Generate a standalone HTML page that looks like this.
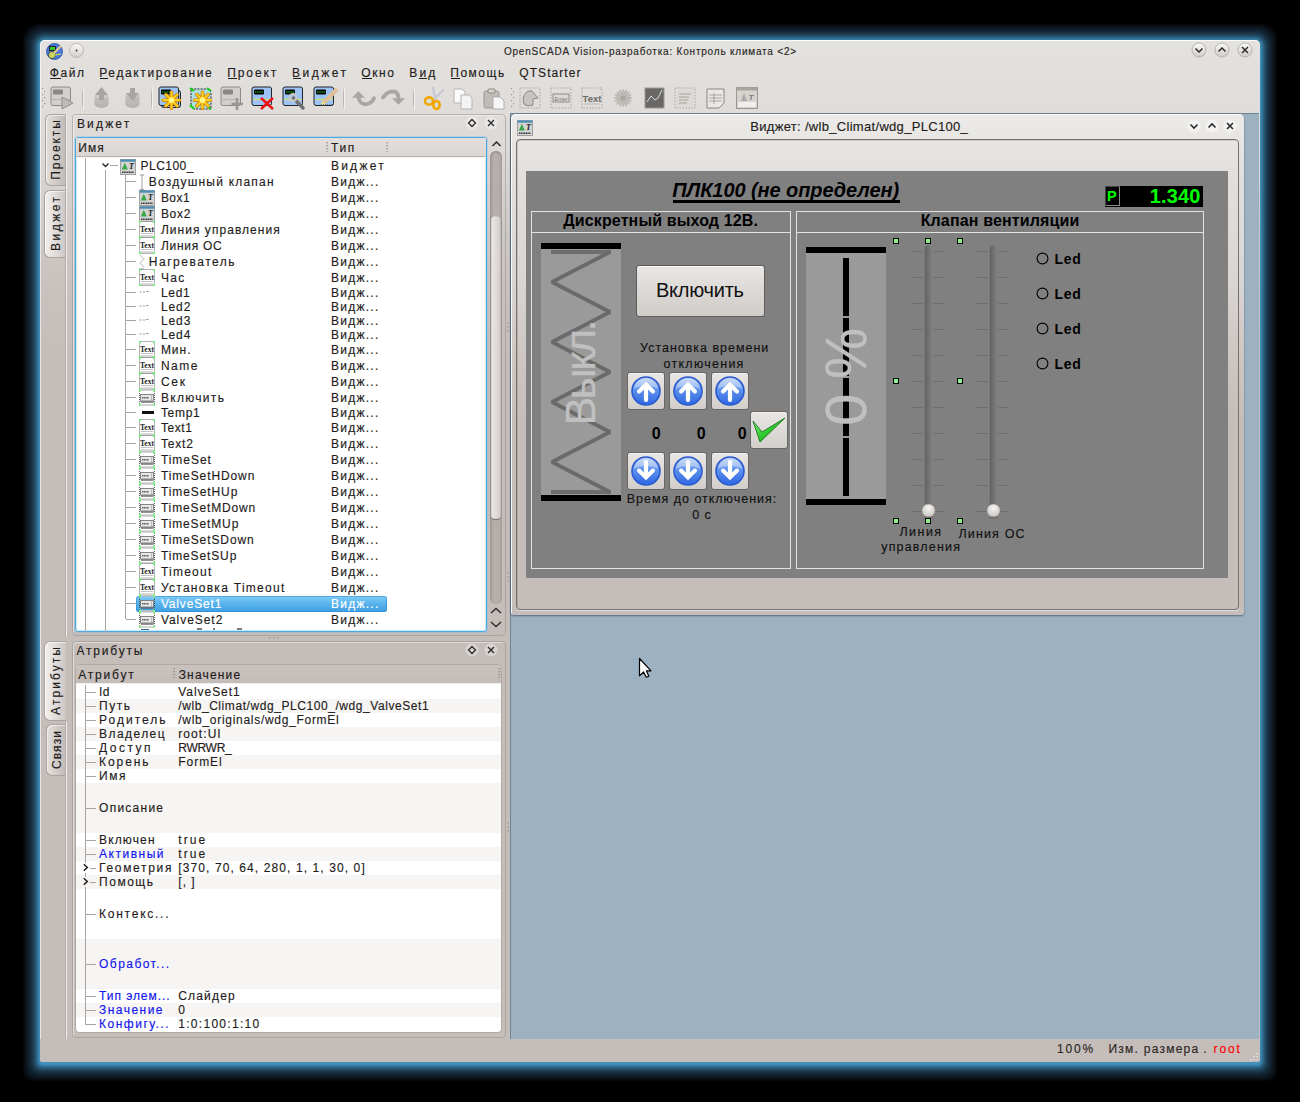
<!DOCTYPE html>
<html><head><meta charset="utf-8"><title>OpenSCADA</title>
<style>
html,body{margin:0;padding:0;}
body{width:1300px;height:1102px;position:relative;overflow:hidden;background:#000;font-family:"Liberation Sans",sans-serif;}
</style></head><body>
<div style="position:absolute;left:40px;top:40px;width:1220px;height:1022px;border-radius:5px 5px 3px 3px;box-shadow:inset 0 1px 0 rgba(255,255,255,0.9),inset 1px 0 0 rgba(255,255,255,0.6),0 1.5px 1px 1px rgb(63, 144, 186),0 1.5px 1px 2px rgb(55, 127, 167),0 1.5px 1px 3px rgb(49, 113, 149),0 1.5px 1px 4px rgb(44, 100, 132),0 1.5px 1px 5px rgb(40, 86, 114),0 1.5px 1px 6px rgb(36, 75, 100),0 1.5px 1px 7px rgb(32, 66, 88),0 1.5px 1px 8px rgb(29, 57, 76),0 1.5px 1px 9px rgb(26, 49, 66),0 1.5px 1px 10px rgb(23, 43, 59),0 1.5px 1px 11px rgb(20, 37, 52),0 1.5px 1px 12px rgb(18, 32, 45),0 1.5px 1px 13px rgb(16, 28, 38),0 1.5px 1px 14px rgb(14, 23, 31),0 1.5px 1px 15px rgb(12, 19, 25),0 1.5px 1px 16px rgb(10, 14, 19),0 1.5px 1px 17px rgb(7, 10, 13);background:linear-gradient(#e4e2df 0px,#dcd9d6 110px,#cec8c5 200px,#c7c0bc 260px,#c5bdb9 320px,#c5bdb9 1022px);"></div>
<span style="position:absolute;left:503.90px;top:46.53px;font:normal 400 10px/10px 'Liberation Sans',sans-serif;color:#2a2725;white-space:pre;letter-spacing:0.796px;-webkit-text-stroke:0.15px currentColor;">OpenSCADA Vision-разработка: Контроль климата &lt;2&gt;</span>
<svg style="position:absolute;left:46px;top:43px;" width="17" height="17" viewBox="0 0 17 17"><circle cx="8.5" cy="8.5" r="8" fill="#4a78d8" stroke="#2a4aa0" stroke-width="0.8"/><rect x="3" y="3" width="7" height="5" fill="#222"/><rect x="4" y="4" width="5" height="3" fill="#3c3"/><circle cx="6" cy="12" r="3.5" fill="#c8d860" stroke="#333" stroke-width="0.7"/><path d="M8 10 L15 3" stroke="#e8c890" stroke-width="2.2"/><path d="M9 12 L15 11" stroke="#ee4" stroke-width="1"/></svg>
<svg style="position:absolute;left:69px;top:43px;" width="16" height="16" viewBox="0 0 16 16"><defs><linearGradient id="gb" x1="0" y1="0" x2="0" y2="1"><stop offset="0" stop-color="#fbfbfa"/><stop offset="1" stop-color="#cfcbc8"/></linearGradient></defs><circle cx="7.5" cy="7.5" r="7" fill="url(#gb)" stroke="#b0aca8" stroke-width="0.8"/><circle cx="7.5" cy="7.5" r="0.9" fill="#333"/></svg>
<svg style="position:absolute;left:1191px;top:42px;" width="16" height="17" viewBox="0 0 16 17"><circle cx="8" cy="8" r="7" fill="url(#gb)" stroke="#aaa6a2" stroke-width="0.8"/><path d="M4.5 6.5 L8 10 L11.5 6.5" stroke="#2b2b2b" stroke-width="1.5" fill="none"/></svg>
<svg style="position:absolute;left:1214px;top:42px;" width="16" height="17" viewBox="0 0 16 17"><circle cx="8" cy="8" r="7" fill="url(#gb)" stroke="#aaa6a2" stroke-width="0.8"/><path d="M4.5 9.5 L8 6 L11.5 9.5" stroke="#2b2b2b" stroke-width="1.5" fill="none"/></svg>
<svg style="position:absolute;left:1237px;top:42px;" width="16" height="17" viewBox="0 0 16 17"><circle cx="8" cy="8" r="7" fill="url(#gb)" stroke="#aaa6a2" stroke-width="0.8"/><path d="M5 5 L11 11 M11 5 L5 11" stroke="#2b2b2b" stroke-width="1.5" fill="none"/></svg>
<span style="position:absolute;left:49.68px;top:67.44px;font:normal 400 12px/12px 'Liberation Sans',sans-serif;color:#1f1c1b;white-space:pre;letter-spacing:1.641px;-webkit-text-stroke:0.15px currentColor;">Файл</span>
<span style="position:absolute;left:99.28px;top:67.44px;font:normal 400 12px/12px 'Liberation Sans',sans-serif;color:#1f1c1b;white-space:pre;letter-spacing:1.617px;-webkit-text-stroke:0.15px currentColor;">Редактирование</span>
<span style="position:absolute;left:227.28px;top:67.44px;font:normal 400 12px/12px 'Liberation Sans',sans-serif;color:#1f1c1b;white-space:pre;letter-spacing:1.882px;-webkit-text-stroke:0.15px currentColor;">Проект</span>
<span style="position:absolute;left:292.08px;top:67.44px;font:normal 400 12px/12px 'Liberation Sans',sans-serif;color:#1f1c1b;white-space:pre;letter-spacing:2.465px;-webkit-text-stroke:0.15px currentColor;">Виджет</span>
<span style="position:absolute;left:361.28px;top:67.44px;font:normal 400 12px/12px 'Liberation Sans',sans-serif;color:#1f1c1b;white-space:pre;letter-spacing:1.583px;-webkit-text-stroke:0.15px currentColor;">Окно</span>
<span style="position:absolute;left:409.28px;top:67.44px;font:normal 400 12px/12px 'Liberation Sans',sans-serif;color:#1f1c1b;white-space:pre;letter-spacing:2.161px;-webkit-text-stroke:0.15px currentColor;">Вид</span>
<span style="position:absolute;left:450.28px;top:67.44px;font:normal 400 12px/12px 'Liberation Sans',sans-serif;color:#1f1c1b;white-space:pre;letter-spacing:1.516px;-webkit-text-stroke:0.15px currentColor;">Помощь</span>
<span style="position:absolute;left:519.28px;top:67.44px;font:normal 400 12px/12px 'Liberation Sans',sans-serif;color:#1f1c1b;white-space:pre;letter-spacing:1.069px;-webkit-text-stroke:0.15px currentColor;">QTStarter</span>
<div style="position:absolute;left:50.4px;top:78px;width:10.5px;height:1px;background:#1f1c1b;"></div>
<div style="position:absolute;left:100px;top:78px;width:8px;height:1px;background:#1f1c1b;"></div>
<div style="position:absolute;left:228px;top:78px;width:9px;height:1px;background:#1f1c1b;"></div>
<div style="position:absolute;left:292.8px;top:78px;width:8.5px;height:1px;background:#1f1c1b;"></div>
<div style="position:absolute;left:362px;top:78px;width:9.5px;height:1px;background:#1f1c1b;"></div>
<div style="position:absolute;left:419px;top:78px;width:8px;height:1px;background:#1f1c1b;"></div>
<div style="position:absolute;left:451px;top:78px;width:9px;height:1px;background:#1f1c1b;"></div>
<svg style="position:absolute;left:42px;top:88px;" width="4" height="22" viewBox="0 0 4 22"><rect x="0" y="0" width="1.2" height="1.2" fill="#9a9692"/><rect x="2" y="3" width="1.2" height="1.2" fill="#9a9692"/><rect x="0" y="6" width="1.2" height="1.2" fill="#9a9692"/><rect x="2" y="9" width="1.2" height="1.2" fill="#9a9692"/><rect x="0" y="12" width="1.2" height="1.2" fill="#9a9692"/><rect x="2" y="15" width="1.2" height="1.2" fill="#9a9692"/><rect x="0" y="18" width="1.2" height="1.2" fill="#9a9692"/></svg>
<svg style="position:absolute;left:511px;top:88px;" width="4" height="22" viewBox="0 0 4 22"><rect x="0" y="0" width="1.2" height="1.2" fill="#9a9692"/><rect x="2" y="3" width="1.2" height="1.2" fill="#9a9692"/><rect x="0" y="6" width="1.2" height="1.2" fill="#9a9692"/><rect x="2" y="9" width="1.2" height="1.2" fill="#9a9692"/><rect x="0" y="12" width="1.2" height="1.2" fill="#9a9692"/><rect x="2" y="15" width="1.2" height="1.2" fill="#9a9692"/><rect x="0" y="18" width="1.2" height="1.2" fill="#9a9692"/></svg>
<div style="position:absolute;left:82px;top:87px;width:1px;height:23px;background:linear-gradient(rgba(170,165,160,0),#b8b3af 30%,#b8b3af 70%,rgba(170,165,160,0));box-shadow:1px 0 0 rgba(255,255,255,0.6);"></div>
<div style="position:absolute;left:151px;top:87px;width:1px;height:23px;background:linear-gradient(rgba(170,165,160,0),#b8b3af 30%,#b8b3af 70%,rgba(170,165,160,0));box-shadow:1px 0 0 rgba(255,255,255,0.6);"></div>
<div style="position:absolute;left:343px;top:87px;width:1px;height:23px;background:linear-gradient(rgba(170,165,160,0),#b8b3af 30%,#b8b3af 70%,rgba(170,165,160,0));box-shadow:1px 0 0 rgba(255,255,255,0.6);"></div>
<div style="position:absolute;left:413px;top:87px;width:1px;height:23px;background:linear-gradient(rgba(170,165,160,0),#b8b3af 30%,#b8b3af 70%,rgba(170,165,160,0));box-shadow:1px 0 0 rgba(255,255,255,0.6);"></div>
<svg style="position:absolute;left:50px;top:85px;" width="26" height="26" viewBox="0 0 26 26"><rect x="1" y="2" width="19.5" height="18.5" rx="2" fill="#d2cfcc" stroke="#8e8a86" stroke-width="1"/><rect x="3" y="4.5" width="10" height="5" rx="1" fill="#8a8784"/><path d="M2 14.5 L19.5 14.5" stroke="#b8b4b0" stroke-width="1.2"/><path d="M12 12 L23 18 L12 24 Z" fill="#bdbab7" stroke="#8e8a86" stroke-width="0.9"/></svg>
<svg style="position:absolute;left:93px;top:87px;" width="17" height="22" viewBox="0 0 17 22"><ellipse cx="8.5" cy="17" rx="7" ry="4" fill="#b8b4b1"/><rect x="1.5" y="9" width="14" height="8" fill="#bdb9b6"/><ellipse cx="8.5" cy="9" rx="7" ry="3" fill="#cfcbc8"/><path d="M8.5 0 L15 8 L11 8 L11 13 L6 13 L6 8 L2 8 Z" fill="#a9a5a2"/></svg>
<svg style="position:absolute;left:124px;top:87px;" width="17" height="22" viewBox="0 0 17 22"><ellipse cx="8.5" cy="17" rx="7" ry="4" fill="#b8b4b1"/><rect x="1.5" y="8" width="14" height="9" fill="#bdb9b6"/><ellipse cx="8.5" cy="8" rx="7" ry="3" fill="#cfcbc8"/><path d="M8.5 14 L15 6 L11 6 L11 1 L6 1 L6 6 L2 6 Z" fill="#a9a5a2"/></svg>
<svg style="position:absolute;left:158px;top:85px;" width="26" height="26" viewBox="0 0 26 26"><rect x="3.5" y="5.5" width="19" height="17" rx="2" fill="#8fb8ee" stroke="#222" stroke-width="1"/><rect x="1" y="2" width="19.5" height="18.5" rx="2" fill="#9cc4f6" stroke="#222" stroke-width="1"/><rect x="3" y="4.5" width="10" height="5" rx="1" fill="#050805"/><path d="M4 7 L12 7" stroke="#1c8a1c" stroke-width="1.6" stroke-dasharray="1.5 0.7"/><path d="M2 14.5 L19.5 14.5" stroke="#d8dc70" stroke-width="1.3"/><path d="M13.50 15.20 L21.50 15.20 M13.50 15.20 L19.16 20.86 M13.50 15.20 L13.50 23.20 M13.50 15.20 L7.84 20.86 M13.50 15.20 L5.50 15.20 M13.50 15.20 L7.84 9.54 M13.50 15.20 L13.50 7.20 M13.50 15.20 L19.16 9.54 " stroke="#c87800" stroke-width="3.6" stroke-linecap="round"/><path d="M13.50 15.20 L21.50 15.20 M13.50 15.20 L19.16 20.86 M13.50 15.20 L13.50 23.20 M13.50 15.20 L7.84 20.86 M13.50 15.20 L5.50 15.20 M13.50 15.20 L7.84 9.54 M13.50 15.20 L13.50 7.20 M13.50 15.20 L19.16 9.54 " stroke="#ffd020" stroke-width="2.2" stroke-linecap="round"/><circle cx="13.5" cy="15.2" r="2.6" fill="#fff890"/></svg>
<svg style="position:absolute;left:188px;top:85px;" width="26" height="26" viewBox="0 0 26 26"><path d="M3 4 L20 4 L23 7 L23 24 L6 24 L3 21 Z" fill="#b0dce4" stroke="#222" stroke-width="1" stroke-dasharray="2 1.2"/><path d="M2 3 L6 6 M19 3 L23 6 M2 20 L6 24 M19 21 L23 24" stroke="#10d010" stroke-width="2"/><path d="M14.50 15.20 L22.50 15.20 M14.50 15.20 L20.16 20.86 M14.50 15.20 L14.50 23.20 M14.50 15.20 L8.84 20.86 M14.50 15.20 L6.50 15.20 M14.50 15.20 L8.84 9.54 M14.50 15.20 L14.50 7.20 M14.50 15.20 L20.16 9.54 " stroke="#c87800" stroke-width="3.6" stroke-linecap="round"/><path d="M14.50 15.20 L22.50 15.20 M14.50 15.20 L20.16 20.86 M14.50 15.20 L14.50 23.20 M14.50 15.20 L8.84 20.86 M14.50 15.20 L6.50 15.20 M14.50 15.20 L8.84 9.54 M14.50 15.20 L14.50 7.20 M14.50 15.20 L20.16 9.54 " stroke="#ffd020" stroke-width="2.2" stroke-linecap="round"/><circle cx="14.5" cy="15.2" r="2.6" fill="#fff890"/></svg>
<svg style="position:absolute;left:220px;top:85px;" width="26" height="26" viewBox="0 0 26 26"><rect x="1" y="2" width="19.5" height="18.5" rx="2" fill="#d2cfcc" stroke="#8e8a86" stroke-width="1"/><rect x="3" y="4.5" width="10" height="5" rx="1" fill="#8a8784"/><path d="M2 14.5 L19.5 14.5" stroke="#b8b4b0" stroke-width="1.2"/><path d="M17 13 L17 25 M11.5 19 L23 19" stroke="#9a9692" stroke-width="2.6"/></svg>
<svg style="position:absolute;left:251px;top:85px;" width="26" height="26" viewBox="0 0 26 26"><rect x="1" y="2" width="19.5" height="18.5" rx="2" fill="#9cc4f6" stroke="#222" stroke-width="1"/><rect x="3" y="4.5" width="10" height="5" rx="1" fill="#050805"/><path d="M4 7 L12 7" stroke="#1c8a1c" stroke-width="1.6" stroke-dasharray="1.5 0.7"/><path d="M2 14.5 L19.5 14.5" stroke="#d8dc70" stroke-width="1.3"/><path d="M10 13 L22 24 M22 13 L10 24" stroke="#ee1010" stroke-width="2.4"/></svg>
<svg style="position:absolute;left:282px;top:85px;" width="26" height="26" viewBox="0 0 26 26"><rect x="1" y="2" width="19.5" height="18.5" rx="2" fill="#9cc4f6" stroke="#222" stroke-width="1"/><rect x="3" y="4.5" width="10" height="5" rx="1" fill="#050805"/><path d="M4 7 L12 7" stroke="#1c8a1c" stroke-width="1.6" stroke-dasharray="1.5 0.7"/><path d="M2 14.5 L19.5 14.5" stroke="#d8dc70" stroke-width="1.3"/><path d="M11.5 13 L21 23" stroke="#707070" stroke-width="3.4" stroke-linecap="round"/><circle cx="11" cy="12.5" r="3.4" fill="none" stroke="#c8c8c8" stroke-width="2.2"/></svg>
<svg style="position:absolute;left:313px;top:85px;" width="26" height="26" viewBox="0 0 26 26"><rect x="1" y="2" width="19.5" height="18.5" rx="2" fill="#9cc4f6" stroke="#222" stroke-width="1"/><rect x="3" y="4.5" width="10" height="5" rx="1" fill="#050805"/><path d="M4 7 L12 7" stroke="#1c8a1c" stroke-width="1.6" stroke-dasharray="1.5 0.7"/><path d="M2 14.5 L19.5 14.5" stroke="#d8dc70" stroke-width="1.3"/><path d="M11 17.5 L24 4" stroke="#e0c098" stroke-width="4.5"/><path d="M11 17.5 L9 19.5" stroke="#e8e088" stroke-width="3.5"/><path d="M8 20 L20 20" stroke="#333" stroke-width="1" stroke-dasharray="1 1"/></svg>
<svg style="position:absolute;left:350px;top:88px;" width="26" height="20" viewBox="0 0 26 20"><path d="M8.5 9 C9 14 12.5 16.5 16 16.2 C19.5 15.8 22.5 13.5 24 10.2" stroke="#aaa6a2" stroke-width="3.8" fill="none" stroke-linecap="round"/><path d="M2 9.8 L8.5 3.3 L15 9.8 Z" fill="#aaa6a2"/></svg>
<svg style="position:absolute;left:380px;top:88px;" width="26" height="20" viewBox="0 0 26 20"><path d="M3 9.5 C6 5 10 3.3 13.5 3.5 C16.5 3.8 18.5 6 18.5 10.5" stroke="#aaa6a2" stroke-width="3.8" fill="none" stroke-linecap="round"/><path d="M12 10.2 L25 10.2 L18.5 16.8 Z" fill="#aaa6a2"/></svg>
<svg style="position:absolute;left:422px;top:86px;" width="24" height="25" viewBox="0 0 24 25"><path d="M11 2 L13.5 13 M21 4 L11.5 14" stroke="#c8c8d4" stroke-width="2.4" stroke-linecap="round"/><ellipse cx="7" cy="15" rx="4" ry="3.6" fill="none" stroke="#f0a800" stroke-width="2.6"/><ellipse cx="14.5" cy="19" rx="3.2" ry="4" fill="none" stroke="#f0a800" stroke-width="2.6"/></svg>
<svg style="position:absolute;left:452px;top:87px;" width="22" height="23" viewBox="0 0 22 23"><path d="M2 2 L10 2 L13 5 L13 16 L2 16 Z" fill="#fafafa" stroke="#b5b5b5"/><path d="M9 8 L17 8 L20 11 L20 22 L9 22 Z" fill="#f4f4f4" stroke="#b5b5b5"/></svg>
<svg style="position:absolute;left:483px;top:87px;" width="22" height="23" viewBox="0 0 22 23"><rect x="1" y="4" width="15" height="17" rx="2" fill="#c0bcb8" stroke="#9c9894"/><rect x="5" y="2" width="7" height="4" rx="1" fill="#d8d4d0" stroke="#8c8884"/><path d="M10 10 L17 10 L21 14 L21 22 L10 22 Z" fill="#f6f6f6" stroke="#b0b0b0"/></svg>
<svg style="position:absolute;left:519px;top:87px;" width="22" height="22" viewBox="0 0 22 22"><rect x="1" y="1" width="20" height="20" fill="none" stroke="#a8a4a0" stroke-width="1" stroke-dasharray="1.5 1.5"/><path d="M5 17 C2 8 8 3 13 4 L19 11 L14 12 L14 18 C11 19 7 19 5 17 Z" fill="#c8c4c0" stroke="#8a8682" stroke-width="1"/></svg>
<svg style="position:absolute;left:550px;top:87px;" width="22" height="22" viewBox="0 0 22 22"><rect x="1" y="1" width="20" height="20" fill="none" stroke="#a8a4a0" stroke-width="1" stroke-dasharray="1.5 1.5"/><rect x="3" y="7" width="16" height="8" fill="#dedad6" stroke="#8e8a86"/><text x="11" y="13.5" font-size="5.5" text-anchor="middle" fill="#777" font-family="Liberation Sans">Enter</text></svg>
<svg style="position:absolute;left:581px;top:87px;" width="22" height="22" viewBox="0 0 22 22"><rect x="1" y="1" width="20" height="20" fill="none" stroke="#a8a4a0" stroke-width="1" stroke-dasharray="1.5 1.5"/><text x="11" y="15" font-size="9.5" font-weight="bold" text-anchor="middle" fill="#6e6a66" font-family="Liberation Sans" textLength="19" lengthAdjust="spacingAndGlyphs">Text</text><path d="M3 17 L19 17" stroke="#bbb" stroke-width="1"/></svg>
<svg style="position:absolute;left:612px;top:87px;" width="22" height="22" viewBox="0 0 22 22"><ellipse cx="16.50" cy="11.00" rx="3.6" ry="1.2" transform="rotate(0.0 16.50 11.00)" fill="#bdb9b5"/><ellipse cx="16.08" cy="13.10" rx="3.6" ry="1.2" transform="rotate(22.5 16.08 13.10)" fill="#bdb9b5"/><ellipse cx="14.89" cy="14.89" rx="3.6" ry="1.2" transform="rotate(45.0 14.89 14.89)" fill="#bdb9b5"/><ellipse cx="13.10" cy="16.08" rx="3.6" ry="1.2" transform="rotate(67.5 13.10 16.08)" fill="#bdb9b5"/><ellipse cx="11.00" cy="16.50" rx="3.6" ry="1.2" transform="rotate(90.0 11.00 16.50)" fill="#bdb9b5"/><ellipse cx="8.90" cy="16.08" rx="3.6" ry="1.2" transform="rotate(112.5 8.90 16.08)" fill="#bdb9b5"/><ellipse cx="7.11" cy="14.89" rx="3.6" ry="1.2" transform="rotate(135.0 7.11 14.89)" fill="#bdb9b5"/><ellipse cx="5.92" cy="13.10" rx="3.6" ry="1.2" transform="rotate(157.5 5.92 13.10)" fill="#bdb9b5"/><ellipse cx="5.50" cy="11.00" rx="3.6" ry="1.2" transform="rotate(180.0 5.50 11.00)" fill="#bdb9b5"/><ellipse cx="5.92" cy="8.90" rx="3.6" ry="1.2" transform="rotate(202.5 5.92 8.90)" fill="#bdb9b5"/><ellipse cx="7.11" cy="7.11" rx="3.6" ry="1.2" transform="rotate(225.0 7.11 7.11)" fill="#bdb9b5"/><ellipse cx="8.90" cy="5.92" rx="3.6" ry="1.2" transform="rotate(247.5 8.90 5.92)" fill="#bdb9b5"/><ellipse cx="11.00" cy="5.50" rx="3.6" ry="1.2" transform="rotate(270.0 11.00 5.50)" fill="#bdb9b5"/><ellipse cx="13.10" cy="5.92" rx="3.6" ry="1.2" transform="rotate(292.5 13.10 5.92)" fill="#bdb9b5"/><ellipse cx="14.89" cy="7.11" rx="3.6" ry="1.2" transform="rotate(315.0 14.89 7.11)" fill="#bdb9b5"/><ellipse cx="16.08" cy="8.90" rx="3.6" ry="1.2" transform="rotate(337.5 16.08 8.90)" fill="#bdb9b5"/><circle cx="11" cy="11" r="2.6" fill="#a8a4a0"/></svg>
<svg style="position:absolute;left:644px;top:87px;" width="21" height="22" viewBox="0 0 21 22"><rect x="1" y="1" width="19" height="20" fill="#6a6866" stroke="#999"/><path d="M3 15 L7 9 L11 13 L14 11 L18 3" stroke="#ddd" stroke-width="1" fill="none"/></svg>
<svg style="position:absolute;left:674px;top:87px;" width="22" height="22" viewBox="0 0 22 22"><rect x="1" y="1" width="20" height="20" fill="none" stroke="#a8a4a0" stroke-width="1" stroke-dasharray="1.5 1.5"/><rect x="3" y="3" width="16" height="16" fill="#dcd8d4"/><path d="M5 7 L17 7 M5 10 L15 10 M5 13 L14 13 M5 16 L13 16" stroke="#a8a4a0"/></svg>
<svg style="position:absolute;left:705px;top:87px;" width="21" height="22" viewBox="0 0 21 22"><path d="M2 2 L19 2 L19 16 L14 21 L2 21 Z" fill="#eae8e6" stroke="#8a8682"/><path d="M4 8 L17 8 M4 11 L17 11 M4 14 L17 14 M9 6 L9 17" stroke="#9a9692" stroke-width="0.8"/></svg>
<svg style="position:absolute;left:736px;top:87px;" width="22" height="22" viewBox="0 0 22 22"><rect x="0.5" y="0.5" width="21" height="21" fill="#d6d2ce" stroke="#9a9692"/><rect x="0.5" y="0.5" width="21" height="3" fill="#a8a4a0"/><path d="M5 14 L8 6 L11 14 Z" fill="#aaa"/><text x="15" y="13" font-size="8" font-weight="bold" font-style="italic" text-anchor="middle" fill="#777" font-family="Liberation Sans">T</text><rect x="2" y="15" width="18" height="5" fill="#eee"/></svg>
<div style="position:absolute;left:40px;top:1039px;width:1220px;height:23px;background:#c5bdb9;border-radius:0 0 3px 3px;"></div>
<span style="position:absolute;left:1056.98px;top:1042.84px;font:normal 400 12px/12px 'Liberation Sans',sans-serif;color:#2a2725;white-space:pre;letter-spacing:1.812px;-webkit-text-stroke:0.15px currentColor;">100%</span>
<span style="position:absolute;left:1108.48px;top:1042.84px;font:normal 400 12px/12px 'Liberation Sans',sans-serif;color:#2a2725;white-space:pre;letter-spacing:1.246px;-webkit-text-stroke:0.15px currentColor;">Изм. размера</span>
<span style="position:absolute;left:1203.28px;top:1042.84px;font:normal 400 12px/12px 'Liberation Sans',sans-serif;color:#2a2725;white-space:pre;-webkit-text-stroke:0.15px currentColor;">.</span>
<span style="position:absolute;left:1213.58px;top:1042.84px;font:normal 400 12px/12px 'Liberation Sans',sans-serif;color:#ff0000;white-space:pre;letter-spacing:1.818px;-webkit-text-stroke:0.15px currentColor;">root</span>
<svg style="position:absolute;left:1249px;top:1051px;" width="9" height="9" viewBox="0 0 9 9"><path d="M8 2 L8 3 M5 5 L5 6 M8 5 L8 6 M2 8 L2 9 M5 8 L5 9 M8 8 L8 9" stroke="#fff" stroke-width="1"/></svg>
<div style="position:absolute;left:510px;top:113px;width:749px;height:926px;background:#9cb1c2;box-shadow:inset 1px 1px 0 #6f8596;"></div>
<div style="position:absolute;left:45px;top:114px;width:20px;height:72px;box-sizing:border-box;border:1px solid #aaa39f;border-right:none;border-radius:6px 0 0 6px;background:linear-gradient(90deg,#e2deda,#d0cac7 60%,#c2bbb8);box-shadow:inset 1px 1px 0 rgba(255,255,255,0.6);"></div>
<span style="position:absolute;left:26.38px;top:144.26px;font:normal 400 12px/12px 'Liberation Sans',sans-serif;color:#1f1c1b;white-space:pre;letter-spacing:1.914px;-webkit-text-stroke:0.15px currentColor;transform:rotate(-90deg);transform-origin:29.82px 6.00px;">Проекты</span>
<div style="position:absolute;left:44px;top:190px;width:22px;height:68px;box-sizing:border-box;border:1px solid #aaa39f;border-right:none;border-radius:6px 0 0 6px;background:linear-gradient(90deg,#f2f0ee,#dcd8d5 60%,#cbc5c2);box-shadow:inset 1px 1px 0 rgba(255,255,255,0.6);"></div>
<span style="position:absolute;left:29.28px;top:217.56px;font:normal 400 12px/12px 'Liberation Sans',sans-serif;color:#1f1c1b;white-space:pre;letter-spacing:2.465px;-webkit-text-stroke:0.15px currentColor;transform:rotate(-90deg);transform-origin:26.92px 6.00px;">Виджет</span>
<div style="position:absolute;left:44px;top:641px;width:22px;height:80px;box-sizing:border-box;border:1px solid #aaa39f;border-right:none;border-radius:6px 0 0 6px;background:linear-gradient(90deg,#f2f0ee,#dcd8d5 60%,#cbc5c2);box-shadow:inset 1px 1px 0 rgba(255,255,255,0.6);"></div>
<span style="position:absolute;left:22.28px;top:674.76px;font:normal 400 12px/12px 'Liberation Sans',sans-serif;color:#1f1c1b;white-space:pre;letter-spacing:2.071px;-webkit-text-stroke:0.15px currentColor;transform:rotate(-90deg);transform-origin:33.92px 6.00px;">Атрибуты</span>
<div style="position:absolute;left:46px;top:724px;width:19px;height:52px;box-sizing:border-box;border:1px solid #aaa39f;border-right:none;border-radius:6px 0 0 6px;background:linear-gradient(90deg,#e2deda,#d0cac7 60%,#c2bbb8);box-shadow:inset 1px 1px 0 rgba(255,255,255,0.6);"></div>
<span style="position:absolute;left:37.73px;top:743.51px;font:normal 400 12px/12px 'Liberation Sans',sans-serif;color:#1f1c1b;white-space:pre;letter-spacing:1.083px;-webkit-text-stroke:0.15px currentColor;transform:rotate(-90deg);transform-origin:18.97px 6.00px;">Связи</span>
<div style="position:absolute;left:65px;top:114px;width:1px;height:523px;background:#b2aba7;box-shadow:1px 0 0 #f0eeec;"></div>
<div style="position:absolute;left:65px;top:722px;width:1px;height:317px;background:#b2aba7;box-shadow:1px 0 0 #f0eeec;"></div>
<div style="position:absolute;left:72px;top:114px;width:434px;height:522px;box-sizing:border-box;border:1px solid rgba(150,142,138,0.55);border-radius:4px;box-shadow:inset 1px 1px 0 rgba(255,255,255,0.45);"></div>
<div style="position:absolute;left:72px;top:641px;width:434px;height:397px;box-sizing:border-box;border:1px solid rgba(150,142,138,0.55);border-radius:4px;box-shadow:inset 1px 1px 0 rgba(255,255,255,0.45);"></div>
<span style="position:absolute;left:76.88px;top:117.84px;font:normal 400 12px/12px 'Liberation Sans',sans-serif;color:#1f1c1b;white-space:pre;letter-spacing:2.185px;-webkit-text-stroke:0.15px currentColor;">Виджет</span>
<span style="position:absolute;left:76.48px;top:644.84px;font:normal 400 12px/12px 'Liberation Sans',sans-serif;color:#1f1c1b;white-space:pre;letter-spacing:1.799px;-webkit-text-stroke:0.15px currentColor;">Атрибуты</span>
<svg style="position:absolute;left:464px;top:114.5px;" width="16" height="16" viewBox="0 0 16 16"><circle cx="8" cy="8" r="6.5" fill="rgba(255,255,255,0.35)"/><path d="M8 4.5 L11.5 8 L8 11.5 L4.5 8 Z" fill="none" stroke="#2b2b2b" stroke-width="1.3"/></svg>
<svg style="position:absolute;left:483px;top:114.5px;" width="16" height="16" viewBox="0 0 16 16"><circle cx="8" cy="8" r="6.5" fill="rgba(255,255,255,0.35)"/><path d="M5 5 L11 11 M11 5 L5 11" stroke="#2b2b2b" stroke-width="1.4"/></svg>
<svg style="position:absolute;left:464px;top:641.5px;" width="16" height="16" viewBox="0 0 16 16"><circle cx="8" cy="8" r="6.5" fill="rgba(255,255,255,0.35)"/><path d="M8 4.5 L11.5 8 L8 11.5 L4.5 8 Z" fill="none" stroke="#2b2b2b" stroke-width="1.3"/></svg>
<svg style="position:absolute;left:483px;top:641.5px;" width="16" height="16" viewBox="0 0 16 16"><circle cx="8" cy="8" r="6.5" fill="rgba(255,255,255,0.35)"/><path d="M5 5 L11 11 M11 5 L5 11" stroke="#2b2b2b" stroke-width="1.4"/></svg>
<svg style="position:absolute;left:269px;top:636px;" width="12" height="4" viewBox="0 0 12 4"><rect x="0" y="1" width="1.5" height="1.5" fill="#a09a96"/><rect x="4" y="1" width="1.5" height="1.5" fill="#a09a96"/><rect x="8" y="1" width="1.5" height="1.5" fill="#a09a96"/></svg>
<svg style="position:absolute;left:507px;top:322px;" width="3" height="12" viewBox="0 0 3 12"><rect x="0.5" y="0" width="1.5" height="1.5" fill="#a09a96"/><rect x="0.5" y="4" width="1.5" height="1.5" fill="#a09a96"/><rect x="0.5" y="8" width="1.5" height="1.5" fill="#a09a96"/></svg>
<svg style="position:absolute;left:507px;top:572px;" width="3" height="12" viewBox="0 0 3 12"><rect x="0.5" y="0" width="1.5" height="1.5" fill="#a09a96"/><rect x="0.5" y="4" width="1.5" height="1.5" fill="#a09a96"/><rect x="0.5" y="8" width="1.5" height="1.5" fill="#a09a96"/></svg>
<svg style="position:absolute;left:507px;top:822px;" width="3" height="12" viewBox="0 0 3 12"><rect x="0.5" y="0" width="1.5" height="1.5" fill="#a09a96"/><rect x="0.5" y="4" width="1.5" height="1.5" fill="#a09a96"/><rect x="0.5" y="8" width="1.5" height="1.5" fill="#a09a96"/></svg>
<div style="position:absolute;left:75px;top:137px;width:412px;height:495px;box-sizing:border-box;border:1px solid #4aa8e2;border-radius:3px;background:#fff;box-shadow:0 0 0 1px rgba(120,190,235,0.35),inset 0 0 1px 1px rgba(150,205,240,0.5);"></div>
<div style="position:absolute;left:76px;top:138px;width:410px;height:19px;background:linear-gradient(#e2dfdc,#dad6d3);border-bottom:1px solid #b9b2ae;box-sizing:border-box;"></div>
<div style="position:absolute;left:76px;top:157px;width:410px;height:1px;background:#f7f6f5;"></div>
<span style="position:absolute;left:78.28px;top:141.84px;font:normal 400 12px/12px 'Liberation Sans',sans-serif;color:#1f1c1b;white-space:pre;letter-spacing:1.033px;-webkit-text-stroke:0.15px currentColor;">Имя</span>
<span style="position:absolute;left:330.88px;top:141.84px;font:normal 400 12px/12px 'Liberation Sans',sans-serif;color:#1f1c1b;white-space:pre;letter-spacing:1.712px;-webkit-text-stroke:0.15px currentColor;">Тип</span>
<svg style="position:absolute;left:325.5px;top:142px;" width="3" height="10" viewBox="0 0 3 10"><rect x="0.5" y="0" width="1.3" height="1.3" fill="#8a8480"/><rect x="0.5" y="3" width="1.3" height="1.3" fill="#8a8480"/><rect x="0.5" y="6" width="1.3" height="1.3" fill="#8a8480"/><rect x="0.5" y="9" width="1.0" height="1.0" fill="#8a8480"/></svg>
<svg style="position:absolute;left:385.5px;top:142px;" width="3" height="10" viewBox="0 0 3 10"><rect x="0.5" y="0" width="1.3" height="1.3" fill="#8a8480"/><rect x="0.5" y="3" width="1.3" height="1.3" fill="#8a8480"/><rect x="0.5" y="6" width="1.3" height="1.3" fill="#8a8480"/><rect x="0.5" y="9" width="1.0" height="1.0" fill="#8a8480"/></svg>
<div style="position:absolute;left:85px;top:158px;width:1px;height:474px;background:#aaa4a0;"></div>
<div style="position:absolute;left:105px;top:170px;width:1px;height:462px;background:#aaa4a0;"></div>
<div style="position:absolute;left:125px;top:174px;width:1px;height:445px;background:#aaa4a0;"></div>
<svg style="position:absolute;left:101px;top:162px;" width="9" height="7" viewBox="0 0 9 7"><path d="M1.5 1.5 L4.5 4.5 L7.5 1.5" stroke="#2b2b2b" stroke-width="1.4" fill="none"/></svg>
<div style="position:absolute;left:110px;top:165px;width:8px;height:1px;background:#aaa4a0;"></div>
<svg style="position:absolute;left:119.5px;top:158.5px;" width="16" height="16" viewBox="0 0 16 16"><rect x="0.5" y="0.5" width="15" height="15" fill="#d4d4d4" stroke="#a0a0a0"/><rect x="0.5" y="0.5" width="15" height="2.2" fill="#4b8db5"/><path d="M1.8 10.5 L4.8 3.8 L7.8 10.5 Z" fill="#3aa848"/><text x="11.5" y="10" font-size="8" font-weight="bold" font-style="italic" text-anchor="middle" fill="#1a1a1a" font-family="Liberation Serif">T</text><path d="M2 13.2 L14 13.2" stroke="#333" stroke-width="1.6" stroke-dasharray="1.2 0.5"/></svg>
<span style="position:absolute;left:140.58px;top:159.84px;font:normal 400 12px/12px 'Liberation Sans',sans-serif;color:#1f1c1b;white-space:pre;letter-spacing:0.466px;-webkit-text-stroke:0.15px currentColor;">PLC100_</span>
<span style="position:absolute;left:330.88px;top:159.84px;font:normal 400 12px/12px 'Liberation Sans',sans-serif;color:#1f1c1b;white-space:pre;letter-spacing:2.265px;-webkit-text-stroke:0.15px currentColor;">Виджет</span>
<div style="position:absolute;left:126px;top:181px;width:10px;height:1px;background:#aaa4a0;"></div>
<svg style="position:absolute;left:139px;top:174px;" width="6" height="16" viewBox="0 0 6 16"><path d="M3 1 L3 15" stroke="#d0d0d0" stroke-width="2"/><path d="M1 1 L5 1 M1 15.5 L5 15.5" stroke="#999" stroke-width="1"/></svg>
<span style="position:absolute;left:148.78px;top:175.84px;font:normal 400 12px/12px 'Liberation Sans',sans-serif;color:#1f1c1b;white-space:pre;letter-spacing:1.219px;-webkit-text-stroke:0.15px currentColor;">Воздушный клапан</span>
<span style="position:absolute;left:330.88px;top:175.84px;font:normal 400 12px/12px 'Liberation Sans',sans-serif;color:#1f1c1b;white-space:pre;letter-spacing:1.282px;-webkit-text-stroke:0.15px currentColor;">Видж...</span>
<div style="position:absolute;left:126px;top:197px;width:10px;height:1px;background:#aaa4a0;"></div>
<svg style="position:absolute;left:139.2px;top:190px;" width="16" height="16" viewBox="0 0 16 16"><rect x="0.5" y="0.5" width="15" height="15" fill="#d4d4d4" stroke="#a0a0a0"/><rect x="0.5" y="0.5" width="15" height="2.2" fill="#4b8db5"/><path d="M1.8 10.5 L4.8 3.8 L7.8 10.5 Z" fill="#3aa848"/><text x="11.5" y="10" font-size="8" font-weight="bold" font-style="italic" text-anchor="middle" fill="#1a1a1a" font-family="Liberation Serif">T</text><path d="M2 13.2 L14 13.2" stroke="#333" stroke-width="1.6" stroke-dasharray="1.2 0.5"/></svg>
<span style="position:absolute;left:160.88px;top:191.84px;font:normal 400 12px/12px 'Liberation Sans',sans-serif;color:#1f1c1b;white-space:pre;letter-spacing:0.494px;-webkit-text-stroke:0.15px currentColor;">Box1</span>
<span style="position:absolute;left:330.88px;top:191.84px;font:normal 400 12px/12px 'Liberation Sans',sans-serif;color:#1f1c1b;white-space:pre;letter-spacing:1.282px;-webkit-text-stroke:0.15px currentColor;">Видж...</span>
<div style="position:absolute;left:126px;top:213px;width:10px;height:1px;background:#aaa4a0;"></div>
<svg style="position:absolute;left:139.2px;top:206px;" width="16" height="16" viewBox="0 0 16 16"><rect x="0.5" y="0.5" width="15" height="15" fill="#d4d4d4" stroke="#a0a0a0"/><rect x="0.5" y="0.5" width="15" height="2.2" fill="#4b8db5"/><path d="M1.8 10.5 L4.8 3.8 L7.8 10.5 Z" fill="#3aa848"/><text x="11.5" y="10" font-size="8" font-weight="bold" font-style="italic" text-anchor="middle" fill="#1a1a1a" font-family="Liberation Serif">T</text><path d="M2 13.2 L14 13.2" stroke="#333" stroke-width="1.6" stroke-dasharray="1.2 0.5"/></svg>
<span style="position:absolute;left:160.88px;top:207.84px;font:normal 400 12px/12px 'Liberation Sans',sans-serif;color:#1f1c1b;white-space:pre;letter-spacing:0.694px;-webkit-text-stroke:0.15px currentColor;">Box2</span>
<span style="position:absolute;left:330.88px;top:207.84px;font:normal 400 12px/12px 'Liberation Sans',sans-serif;color:#1f1c1b;white-space:pre;letter-spacing:1.282px;-webkit-text-stroke:0.15px currentColor;">Видж...</span>
<div style="position:absolute;left:126px;top:229px;width:10px;height:1px;background:#aaa4a0;"></div>
<svg style="position:absolute;left:139px;top:221px;" width="16" height="17" viewBox="0 0 16 17"><rect x="0.5" y="0.5" width="15" height="16" fill="#fff" stroke="#444" stroke-width="0.8" stroke-dasharray="1 1"/><rect x="0" y="0" width="2" height="2" fill="#7e7"/><rect x="14" y="0" width="2" height="2" fill="#7e7"/><rect x="0" y="15" width="2" height="2" fill="#7e7"/><rect x="14" y="15" width="2" height="2" fill="#7e7"/><text x="8" y="10.5" font-size="7.5" font-weight="bold" text-anchor="middle" fill="#222" font-family="Liberation Serif" textLength="14" lengthAdjust="spacingAndGlyphs">Text</text><path d="M2 12.5 L14 12.5" stroke="#999" stroke-width="0.6"/><path d="M2 15 L14 15" stroke="#cfcfcf" stroke-width="1.6"/></svg>
<span style="position:absolute;left:160.88px;top:223.84px;font:normal 400 12px/12px 'Liberation Sans',sans-serif;color:#1f1c1b;white-space:pre;letter-spacing:1.042px;-webkit-text-stroke:0.15px currentColor;">Линия управления</span>
<span style="position:absolute;left:330.88px;top:223.84px;font:normal 400 12px/12px 'Liberation Sans',sans-serif;color:#1f1c1b;white-space:pre;letter-spacing:1.282px;-webkit-text-stroke:0.15px currentColor;">Видж...</span>
<div style="position:absolute;left:126px;top:245px;width:10px;height:1px;background:#aaa4a0;"></div>
<svg style="position:absolute;left:139px;top:237px;" width="16" height="17" viewBox="0 0 16 17"><rect x="0.5" y="0.5" width="15" height="16" fill="#fff" stroke="#444" stroke-width="0.8" stroke-dasharray="1 1"/><rect x="0" y="0" width="2" height="2" fill="#7e7"/><rect x="14" y="0" width="2" height="2" fill="#7e7"/><rect x="0" y="15" width="2" height="2" fill="#7e7"/><rect x="14" y="15" width="2" height="2" fill="#7e7"/><text x="8" y="10.5" font-size="7.5" font-weight="bold" text-anchor="middle" fill="#222" font-family="Liberation Serif" textLength="14" lengthAdjust="spacingAndGlyphs">Text</text><path d="M2 12.5 L14 12.5" stroke="#999" stroke-width="0.6"/><path d="M2 15 L14 15" stroke="#cfcfcf" stroke-width="1.6"/></svg>
<span style="position:absolute;left:160.88px;top:239.84px;font:normal 400 12px/12px 'Liberation Sans',sans-serif;color:#1f1c1b;white-space:pre;letter-spacing:0.727px;-webkit-text-stroke:0.15px currentColor;">Линия ОС</span>
<span style="position:absolute;left:330.88px;top:239.84px;font:normal 400 12px/12px 'Liberation Sans',sans-serif;color:#1f1c1b;white-space:pre;letter-spacing:1.282px;-webkit-text-stroke:0.15px currentColor;">Видж...</span>
<div style="position:absolute;left:126px;top:261px;width:10px;height:1px;background:#aaa4a0;"></div>
<svg style="position:absolute;left:139px;top:254px;" width="6" height="16" viewBox="0 0 6 16"><path d="M1 1 L5 5 L1 9 L5 13" stroke="#d0d0d0" stroke-width="1.2" fill="none"/><path d="M0 15 L5 15" stroke="#888"/></svg>
<span style="position:absolute;left:148.78px;top:255.84px;font:normal 400 12px/12px 'Liberation Sans',sans-serif;color:#1f1c1b;white-space:pre;letter-spacing:1.523px;-webkit-text-stroke:0.15px currentColor;">Нагреватель</span>
<span style="position:absolute;left:330.88px;top:255.84px;font:normal 400 12px/12px 'Liberation Sans',sans-serif;color:#1f1c1b;white-space:pre;letter-spacing:1.282px;-webkit-text-stroke:0.15px currentColor;">Видж...</span>
<div style="position:absolute;left:126px;top:277px;width:10px;height:1px;background:#aaa4a0;"></div>
<svg style="position:absolute;left:139px;top:269px;" width="16" height="17" viewBox="0 0 16 17"><rect x="0.5" y="0.5" width="15" height="16" fill="#fff" stroke="#444" stroke-width="0.8" stroke-dasharray="1 1"/><rect x="0" y="0" width="2" height="2" fill="#7e7"/><rect x="14" y="0" width="2" height="2" fill="#7e7"/><rect x="0" y="15" width="2" height="2" fill="#7e7"/><rect x="14" y="15" width="2" height="2" fill="#7e7"/><text x="8" y="10.5" font-size="7.5" font-weight="bold" text-anchor="middle" fill="#222" font-family="Liberation Serif" textLength="14" lengthAdjust="spacingAndGlyphs">Text</text><path d="M2 12.5 L14 12.5" stroke="#999" stroke-width="0.6"/><path d="M2 15 L14 15" stroke="#cfcfcf" stroke-width="1.6"/></svg>
<span style="position:absolute;left:160.88px;top:271.84px;font:normal 400 12px/12px 'Liberation Sans',sans-serif;color:#1f1c1b;white-space:pre;letter-spacing:1.384px;-webkit-text-stroke:0.15px currentColor;">Час</span>
<span style="position:absolute;left:330.88px;top:271.84px;font:normal 400 12px/12px 'Liberation Sans',sans-serif;color:#1f1c1b;white-space:pre;letter-spacing:1.282px;-webkit-text-stroke:0.15px currentColor;">Видж...</span>
<div style="position:absolute;left:126px;top:292px;width:10px;height:1px;background:#aaa4a0;"></div>
<svg style="position:absolute;left:139px;top:289px;" width="10" height="6" viewBox="0 0 10 6"><path d="M0.5 3 L2.5 3 M4 3 L6 3 M7 2.5 L9.5 2.5" stroke="#9a9a9a" stroke-width="1"/></svg>
<span style="position:absolute;left:160.88px;top:286.84px;font:normal 400 12px/12px 'Liberation Sans',sans-serif;color:#1f1c1b;white-space:pre;letter-spacing:0.712px;-webkit-text-stroke:0.15px currentColor;">Led1</span>
<span style="position:absolute;left:330.88px;top:286.84px;font:normal 400 12px/12px 'Liberation Sans',sans-serif;color:#1f1c1b;white-space:pre;letter-spacing:1.282px;-webkit-text-stroke:0.15px currentColor;">Видж...</span>
<div style="position:absolute;left:126px;top:306px;width:10px;height:1px;background:#aaa4a0;"></div>
<svg style="position:absolute;left:139px;top:303px;" width="10" height="6" viewBox="0 0 10 6"><path d="M0.5 3 L2.5 3 M4 3 L6 3 M7 2.5 L9.5 2.5" stroke="#9a9a9a" stroke-width="1"/></svg>
<span style="position:absolute;left:160.88px;top:300.84px;font:normal 400 12px/12px 'Liberation Sans',sans-serif;color:#1f1c1b;white-space:pre;letter-spacing:0.912px;-webkit-text-stroke:0.15px currentColor;">Led2</span>
<span style="position:absolute;left:330.88px;top:300.84px;font:normal 400 12px/12px 'Liberation Sans',sans-serif;color:#1f1c1b;white-space:pre;letter-spacing:1.282px;-webkit-text-stroke:0.15px currentColor;">Видж...</span>
<div style="position:absolute;left:126px;top:320px;width:10px;height:1px;background:#aaa4a0;"></div>
<svg style="position:absolute;left:139px;top:317px;" width="10" height="6" viewBox="0 0 10 6"><path d="M0.5 3 L2.5 3 M4 3 L6 3 M7 2.5 L9.5 2.5" stroke="#9a9a9a" stroke-width="1"/></svg>
<span style="position:absolute;left:160.88px;top:314.84px;font:normal 400 12px/12px 'Liberation Sans',sans-serif;color:#1f1c1b;white-space:pre;letter-spacing:0.912px;-webkit-text-stroke:0.15px currentColor;">Led3</span>
<span style="position:absolute;left:330.88px;top:314.84px;font:normal 400 12px/12px 'Liberation Sans',sans-serif;color:#1f1c1b;white-space:pre;letter-spacing:1.282px;-webkit-text-stroke:0.15px currentColor;">Видж...</span>
<div style="position:absolute;left:126px;top:334px;width:10px;height:1px;background:#aaa4a0;"></div>
<svg style="position:absolute;left:139px;top:331px;" width="10" height="6" viewBox="0 0 10 6"><path d="M0.5 3 L2.5 3 M4 3 L6 3 M7 2.5 L9.5 2.5" stroke="#9a9a9a" stroke-width="1"/></svg>
<span style="position:absolute;left:160.88px;top:328.84px;font:normal 400 12px/12px 'Liberation Sans',sans-serif;color:#1f1c1b;white-space:pre;letter-spacing:0.912px;-webkit-text-stroke:0.15px currentColor;">Led4</span>
<span style="position:absolute;left:330.88px;top:328.84px;font:normal 400 12px/12px 'Liberation Sans',sans-serif;color:#1f1c1b;white-space:pre;letter-spacing:1.282px;-webkit-text-stroke:0.15px currentColor;">Видж...</span>
<div style="position:absolute;left:126px;top:349px;width:10px;height:1px;background:#aaa4a0;"></div>
<svg style="position:absolute;left:139px;top:341px;" width="16" height="17" viewBox="0 0 16 17"><rect x="0.5" y="0.5" width="15" height="16" fill="#fff" stroke="#444" stroke-width="0.8" stroke-dasharray="1 1"/><rect x="0" y="0" width="2" height="2" fill="#7e7"/><rect x="14" y="0" width="2" height="2" fill="#7e7"/><rect x="0" y="15" width="2" height="2" fill="#7e7"/><rect x="14" y="15" width="2" height="2" fill="#7e7"/><text x="8" y="10.5" font-size="7.5" font-weight="bold" text-anchor="middle" fill="#222" font-family="Liberation Serif" textLength="14" lengthAdjust="spacingAndGlyphs">Text</text><path d="M2 12.5 L14 12.5" stroke="#999" stroke-width="0.6"/><path d="M2 15 L14 15" stroke="#cfcfcf" stroke-width="1.6"/></svg>
<span style="position:absolute;left:160.88px;top:343.84px;font:normal 400 12px/12px 'Liberation Sans',sans-serif;color:#1f1c1b;white-space:pre;letter-spacing:0.989px;-webkit-text-stroke:0.15px currentColor;">Мин.</span>
<span style="position:absolute;left:330.88px;top:343.84px;font:normal 400 12px/12px 'Liberation Sans',sans-serif;color:#1f1c1b;white-space:pre;letter-spacing:1.282px;-webkit-text-stroke:0.15px currentColor;">Видж...</span>
<div style="position:absolute;left:126px;top:365px;width:10px;height:1px;background:#aaa4a0;"></div>
<svg style="position:absolute;left:139px;top:357px;" width="16" height="17" viewBox="0 0 16 17"><rect x="0.5" y="0.5" width="15" height="16" fill="#fff" stroke="#444" stroke-width="0.8" stroke-dasharray="1 1"/><rect x="0" y="0" width="2" height="2" fill="#7e7"/><rect x="14" y="0" width="2" height="2" fill="#7e7"/><rect x="0" y="15" width="2" height="2" fill="#7e7"/><rect x="14" y="15" width="2" height="2" fill="#7e7"/><text x="8" y="10.5" font-size="7.5" font-weight="bold" text-anchor="middle" fill="#222" font-family="Liberation Serif" textLength="14" lengthAdjust="spacingAndGlyphs">Text</text><path d="M2 12.5 L14 12.5" stroke="#999" stroke-width="0.6"/><path d="M2 15 L14 15" stroke="#cfcfcf" stroke-width="1.6"/></svg>
<span style="position:absolute;left:160.88px;top:359.84px;font:normal 400 12px/12px 'Liberation Sans',sans-serif;color:#1f1c1b;white-space:pre;letter-spacing:1.475px;-webkit-text-stroke:0.15px currentColor;">Name</span>
<span style="position:absolute;left:330.88px;top:359.84px;font:normal 400 12px/12px 'Liberation Sans',sans-serif;color:#1f1c1b;white-space:pre;letter-spacing:1.282px;-webkit-text-stroke:0.15px currentColor;">Видж...</span>
<div style="position:absolute;left:126px;top:381px;width:10px;height:1px;background:#aaa4a0;"></div>
<svg style="position:absolute;left:139px;top:373px;" width="16" height="17" viewBox="0 0 16 17"><rect x="0.5" y="0.5" width="15" height="16" fill="#fff" stroke="#444" stroke-width="0.8" stroke-dasharray="1 1"/><rect x="0" y="0" width="2" height="2" fill="#7e7"/><rect x="14" y="0" width="2" height="2" fill="#7e7"/><rect x="0" y="15" width="2" height="2" fill="#7e7"/><rect x="14" y="15" width="2" height="2" fill="#7e7"/><text x="8" y="10.5" font-size="7.5" font-weight="bold" text-anchor="middle" fill="#222" font-family="Liberation Serif" textLength="14" lengthAdjust="spacingAndGlyphs">Text</text><path d="M2 12.5 L14 12.5" stroke="#999" stroke-width="0.6"/><path d="M2 15 L14 15" stroke="#cfcfcf" stroke-width="1.6"/></svg>
<span style="position:absolute;left:160.88px;top:375.84px;font:normal 400 12px/12px 'Liberation Sans',sans-serif;color:#1f1c1b;white-space:pre;letter-spacing:1.723px;-webkit-text-stroke:0.15px currentColor;">Сек</span>
<span style="position:absolute;left:330.88px;top:375.84px;font:normal 400 12px/12px 'Liberation Sans',sans-serif;color:#1f1c1b;white-space:pre;letter-spacing:1.282px;-webkit-text-stroke:0.15px currentColor;">Видж...</span>
<div style="position:absolute;left:126px;top:397px;width:10px;height:1px;background:#aaa4a0;"></div>
<svg style="position:absolute;left:139px;top:389px;" width="16" height="17" viewBox="0 0 16 17"><path d="M0.5 0 L0.5 17 M15.5 0 L15.5 17" stroke="#333" stroke-width="0.8" stroke-dasharray="1 1"/><path d="M2 1 L14 1 M2 16 L14 16" stroke="#c8c8c8" stroke-width="1.6"/><rect x="0" y="0" width="2" height="2.5" fill="#8e8"/><rect x="14" y="0" width="2" height="2.5" fill="#8e8"/><rect x="0" y="14.5" width="2" height="2.5" fill="#8e8"/><rect x="14" y="14.5" width="2" height="2.5" fill="#8e8"/><rect x="1.5" y="5.5" width="13" height="6.5" fill="#e8e8e8" stroke="#7a7a7a" stroke-width="0.9"/><path d="M2 13 L14.5 13" stroke="#666" stroke-width="1.4"/><path d="M3 8.8 L10 8.8" stroke="#555" stroke-width="1.6" stroke-dasharray="1.2 0.5"/><path d="M12.5 6.5 L12.5 11" stroke="#bbb" stroke-width="1.2"/></svg>
<span style="position:absolute;left:160.88px;top:391.84px;font:normal 400 12px/12px 'Liberation Sans',sans-serif;color:#1f1c1b;white-space:pre;letter-spacing:1.314px;-webkit-text-stroke:0.15px currentColor;">Включить</span>
<span style="position:absolute;left:330.88px;top:391.84px;font:normal 400 12px/12px 'Liberation Sans',sans-serif;color:#1f1c1b;white-space:pre;letter-spacing:1.282px;-webkit-text-stroke:0.15px currentColor;">Видж...</span>
<div style="position:absolute;left:126px;top:412px;width:10px;height:1px;background:#aaa4a0;"></div>
<div style="position:absolute;left:142px;top:411px;width:12px;height:3px;background:#111;"></div>
<span style="position:absolute;left:160.88px;top:406.84px;font:normal 400 12px/12px 'Liberation Sans',sans-serif;color:#1f1c1b;white-space:pre;letter-spacing:0.702px;-webkit-text-stroke:0.15px currentColor;">Temp1</span>
<span style="position:absolute;left:330.88px;top:406.84px;font:normal 400 12px/12px 'Liberation Sans',sans-serif;color:#1f1c1b;white-space:pre;letter-spacing:1.282px;-webkit-text-stroke:0.15px currentColor;">Видж...</span>
<div style="position:absolute;left:126px;top:427px;width:10px;height:1px;background:#aaa4a0;"></div>
<svg style="position:absolute;left:139px;top:419px;" width="16" height="17" viewBox="0 0 16 17"><rect x="0.5" y="0.5" width="15" height="16" fill="#fff" stroke="#444" stroke-width="0.8" stroke-dasharray="1 1"/><rect x="0" y="0" width="2" height="2" fill="#7e7"/><rect x="14" y="0" width="2" height="2" fill="#7e7"/><rect x="0" y="15" width="2" height="2" fill="#7e7"/><rect x="14" y="15" width="2" height="2" fill="#7e7"/><text x="8" y="10.5" font-size="7.5" font-weight="bold" text-anchor="middle" fill="#222" font-family="Liberation Serif" textLength="14" lengthAdjust="spacingAndGlyphs">Text</text><path d="M2 12.5 L14 12.5" stroke="#999" stroke-width="0.6"/><path d="M2 15 L14 15" stroke="#cfcfcf" stroke-width="1.6"/></svg>
<span style="position:absolute;left:160.88px;top:421.84px;font:normal 400 12px/12px 'Liberation Sans',sans-serif;color:#1f1c1b;white-space:pre;letter-spacing:0.588px;-webkit-text-stroke:0.15px currentColor;">Text1</span>
<span style="position:absolute;left:330.88px;top:421.84px;font:normal 400 12px/12px 'Liberation Sans',sans-serif;color:#1f1c1b;white-space:pre;letter-spacing:1.282px;-webkit-text-stroke:0.15px currentColor;">Видж...</span>
<div style="position:absolute;left:126px;top:443px;width:10px;height:1px;background:#aaa4a0;"></div>
<svg style="position:absolute;left:139px;top:435px;" width="16" height="17" viewBox="0 0 16 17"><rect x="0.5" y="0.5" width="15" height="16" fill="#fff" stroke="#444" stroke-width="0.8" stroke-dasharray="1 1"/><rect x="0" y="0" width="2" height="2" fill="#7e7"/><rect x="14" y="0" width="2" height="2" fill="#7e7"/><rect x="0" y="15" width="2" height="2" fill="#7e7"/><rect x="14" y="15" width="2" height="2" fill="#7e7"/><text x="8" y="10.5" font-size="7.5" font-weight="bold" text-anchor="middle" fill="#222" font-family="Liberation Serif" textLength="14" lengthAdjust="spacingAndGlyphs">Text</text><path d="M2 12.5 L14 12.5" stroke="#999" stroke-width="0.6"/><path d="M2 15 L14 15" stroke="#cfcfcf" stroke-width="1.6"/></svg>
<span style="position:absolute;left:160.88px;top:437.84px;font:normal 400 12px/12px 'Liberation Sans',sans-serif;color:#1f1c1b;white-space:pre;letter-spacing:0.838px;-webkit-text-stroke:0.15px currentColor;">Text2</span>
<span style="position:absolute;left:330.88px;top:437.84px;font:normal 400 12px/12px 'Liberation Sans',sans-serif;color:#1f1c1b;white-space:pre;letter-spacing:1.282px;-webkit-text-stroke:0.15px currentColor;">Видж...</span>
<div style="position:absolute;left:126px;top:459px;width:10px;height:1px;background:#aaa4a0;"></div>
<svg style="position:absolute;left:139px;top:451px;" width="16" height="17" viewBox="0 0 16 17"><path d="M0.5 0 L0.5 17 M15.5 0 L15.5 17" stroke="#333" stroke-width="0.8" stroke-dasharray="1 1"/><path d="M2 1 L14 1 M2 16 L14 16" stroke="#c8c8c8" stroke-width="1.6"/><rect x="0" y="0" width="2" height="2.5" fill="#8e8"/><rect x="14" y="0" width="2" height="2.5" fill="#8e8"/><rect x="0" y="14.5" width="2" height="2.5" fill="#8e8"/><rect x="14" y="14.5" width="2" height="2.5" fill="#8e8"/><rect x="1.5" y="5.5" width="13" height="6.5" fill="#e8e8e8" stroke="#7a7a7a" stroke-width="0.9"/><path d="M2 13 L14.5 13" stroke="#666" stroke-width="1.4"/><path d="M3 8.8 L10 8.8" stroke="#555" stroke-width="1.6" stroke-dasharray="1.2 0.5"/><path d="M12.5 6.5 L12.5 11" stroke="#bbb" stroke-width="1.2"/></svg>
<span style="position:absolute;left:160.88px;top:453.84px;font:normal 400 12px/12px 'Liberation Sans',sans-serif;color:#1f1c1b;white-space:pre;letter-spacing:0.968px;-webkit-text-stroke:0.15px currentColor;">TimeSet</span>
<span style="position:absolute;left:330.88px;top:453.84px;font:normal 400 12px/12px 'Liberation Sans',sans-serif;color:#1f1c1b;white-space:pre;letter-spacing:1.282px;-webkit-text-stroke:0.15px currentColor;">Видж...</span>
<div style="position:absolute;left:126px;top:475px;width:10px;height:1px;background:#aaa4a0;"></div>
<svg style="position:absolute;left:139px;top:467px;" width="16" height="17" viewBox="0 0 16 17"><path d="M0.5 0 L0.5 17 M15.5 0 L15.5 17" stroke="#333" stroke-width="0.8" stroke-dasharray="1 1"/><path d="M2 1 L14 1 M2 16 L14 16" stroke="#c8c8c8" stroke-width="1.6"/><rect x="0" y="0" width="2" height="2.5" fill="#8e8"/><rect x="14" y="0" width="2" height="2.5" fill="#8e8"/><rect x="0" y="14.5" width="2" height="2.5" fill="#8e8"/><rect x="14" y="14.5" width="2" height="2.5" fill="#8e8"/><rect x="1.5" y="5.5" width="13" height="6.5" fill="#e8e8e8" stroke="#7a7a7a" stroke-width="0.9"/><path d="M2 13 L14.5 13" stroke="#666" stroke-width="1.4"/><path d="M3 8.8 L10 8.8" stroke="#555" stroke-width="1.6" stroke-dasharray="1.2 0.5"/><path d="M12.5 6.5 L12.5 11" stroke="#bbb" stroke-width="1.2"/></svg>
<span style="position:absolute;left:160.88px;top:469.84px;font:normal 400 12px/12px 'Liberation Sans',sans-serif;color:#1f1c1b;white-space:pre;letter-spacing:0.897px;-webkit-text-stroke:0.15px currentColor;">TimeSetHDown</span>
<span style="position:absolute;left:330.88px;top:469.84px;font:normal 400 12px/12px 'Liberation Sans',sans-serif;color:#1f1c1b;white-space:pre;letter-spacing:1.282px;-webkit-text-stroke:0.15px currentColor;">Видж...</span>
<div style="position:absolute;left:126px;top:491px;width:10px;height:1px;background:#aaa4a0;"></div>
<svg style="position:absolute;left:139px;top:483px;" width="16" height="17" viewBox="0 0 16 17"><path d="M0.5 0 L0.5 17 M15.5 0 L15.5 17" stroke="#333" stroke-width="0.8" stroke-dasharray="1 1"/><path d="M2 1 L14 1 M2 16 L14 16" stroke="#c8c8c8" stroke-width="1.6"/><rect x="0" y="0" width="2" height="2.5" fill="#8e8"/><rect x="14" y="0" width="2" height="2.5" fill="#8e8"/><rect x="0" y="14.5" width="2" height="2.5" fill="#8e8"/><rect x="14" y="14.5" width="2" height="2.5" fill="#8e8"/><rect x="1.5" y="5.5" width="13" height="6.5" fill="#e8e8e8" stroke="#7a7a7a" stroke-width="0.9"/><path d="M2 13 L14.5 13" stroke="#666" stroke-width="1.4"/><path d="M3 8.8 L10 8.8" stroke="#555" stroke-width="1.6" stroke-dasharray="1.2 0.5"/><path d="M12.5 6.5 L12.5 11" stroke="#bbb" stroke-width="1.2"/></svg>
<span style="position:absolute;left:160.88px;top:485.84px;font:normal 400 12px/12px 'Liberation Sans',sans-serif;color:#1f1c1b;white-space:pre;letter-spacing:0.910px;-webkit-text-stroke:0.15px currentColor;">TimeSetHUp</span>
<span style="position:absolute;left:330.88px;top:485.84px;font:normal 400 12px/12px 'Liberation Sans',sans-serif;color:#1f1c1b;white-space:pre;letter-spacing:1.282px;-webkit-text-stroke:0.15px currentColor;">Видж...</span>
<div style="position:absolute;left:126px;top:507px;width:10px;height:1px;background:#aaa4a0;"></div>
<svg style="position:absolute;left:139px;top:499px;" width="16" height="17" viewBox="0 0 16 17"><path d="M0.5 0 L0.5 17 M15.5 0 L15.5 17" stroke="#333" stroke-width="0.8" stroke-dasharray="1 1"/><path d="M2 1 L14 1 M2 16 L14 16" stroke="#c8c8c8" stroke-width="1.6"/><rect x="0" y="0" width="2" height="2.5" fill="#8e8"/><rect x="14" y="0" width="2" height="2.5" fill="#8e8"/><rect x="0" y="14.5" width="2" height="2.5" fill="#8e8"/><rect x="14" y="14.5" width="2" height="2.5" fill="#8e8"/><rect x="1.5" y="5.5" width="13" height="6.5" fill="#e8e8e8" stroke="#7a7a7a" stroke-width="0.9"/><path d="M2 13 L14.5 13" stroke="#666" stroke-width="1.4"/><path d="M3 8.8 L10 8.8" stroke="#555" stroke-width="1.6" stroke-dasharray="1.2 0.5"/><path d="M12.5 6.5 L12.5 11" stroke="#bbb" stroke-width="1.2"/></svg>
<span style="position:absolute;left:160.88px;top:501.84px;font:normal 400 12px/12px 'Liberation Sans',sans-serif;color:#1f1c1b;white-space:pre;letter-spacing:0.865px;-webkit-text-stroke:0.15px currentColor;">TimeSetMDown</span>
<span style="position:absolute;left:330.88px;top:501.84px;font:normal 400 12px/12px 'Liberation Sans',sans-serif;color:#1f1c1b;white-space:pre;letter-spacing:1.282px;-webkit-text-stroke:0.15px currentColor;">Видж...</span>
<div style="position:absolute;left:126px;top:523px;width:10px;height:1px;background:#aaa4a0;"></div>
<svg style="position:absolute;left:139px;top:515px;" width="16" height="17" viewBox="0 0 16 17"><path d="M0.5 0 L0.5 17 M15.5 0 L15.5 17" stroke="#333" stroke-width="0.8" stroke-dasharray="1 1"/><path d="M2 1 L14 1 M2 16 L14 16" stroke="#c8c8c8" stroke-width="1.6"/><rect x="0" y="0" width="2" height="2.5" fill="#8e8"/><rect x="14" y="0" width="2" height="2.5" fill="#8e8"/><rect x="0" y="14.5" width="2" height="2.5" fill="#8e8"/><rect x="14" y="14.5" width="2" height="2.5" fill="#8e8"/><rect x="1.5" y="5.5" width="13" height="6.5" fill="#e8e8e8" stroke="#7a7a7a" stroke-width="0.9"/><path d="M2 13 L14.5 13" stroke="#666" stroke-width="1.4"/><path d="M3 8.8 L10 8.8" stroke="#555" stroke-width="1.6" stroke-dasharray="1.2 0.5"/><path d="M12.5 6.5 L12.5 11" stroke="#bbb" stroke-width="1.2"/></svg>
<span style="position:absolute;left:160.88px;top:517.84px;font:normal 400 12px/12px 'Liberation Sans',sans-serif;color:#1f1c1b;white-space:pre;letter-spacing:0.874px;-webkit-text-stroke:0.15px currentColor;">TimeSetMUp</span>
<span style="position:absolute;left:330.88px;top:517.84px;font:normal 400 12px/12px 'Liberation Sans',sans-serif;color:#1f1c1b;white-space:pre;letter-spacing:1.282px;-webkit-text-stroke:0.15px currentColor;">Видж...</span>
<div style="position:absolute;left:126px;top:539px;width:10px;height:1px;background:#aaa4a0;"></div>
<svg style="position:absolute;left:139px;top:531px;" width="16" height="17" viewBox="0 0 16 17"><path d="M0.5 0 L0.5 17 M15.5 0 L15.5 17" stroke="#333" stroke-width="0.8" stroke-dasharray="1 1"/><path d="M2 1 L14 1 M2 16 L14 16" stroke="#c8c8c8" stroke-width="1.6"/><rect x="0" y="0" width="2" height="2.5" fill="#8e8"/><rect x="14" y="0" width="2" height="2.5" fill="#8e8"/><rect x="0" y="14.5" width="2" height="2.5" fill="#8e8"/><rect x="14" y="14.5" width="2" height="2.5" fill="#8e8"/><rect x="1.5" y="5.5" width="13" height="6.5" fill="#e8e8e8" stroke="#7a7a7a" stroke-width="0.9"/><path d="M2 13 L14.5 13" stroke="#666" stroke-width="1.4"/><path d="M3 8.8 L10 8.8" stroke="#555" stroke-width="1.6" stroke-dasharray="1.2 0.5"/><path d="M12.5 6.5 L12.5 11" stroke="#bbb" stroke-width="1.2"/></svg>
<span style="position:absolute;left:160.88px;top:533.84px;font:normal 400 12px/12px 'Liberation Sans',sans-serif;color:#1f1c1b;white-space:pre;letter-spacing:0.902px;-webkit-text-stroke:0.15px currentColor;">TimeSetSDown</span>
<span style="position:absolute;left:330.88px;top:533.84px;font:normal 400 12px/12px 'Liberation Sans',sans-serif;color:#1f1c1b;white-space:pre;letter-spacing:1.282px;-webkit-text-stroke:0.15px currentColor;">Видж...</span>
<div style="position:absolute;left:126px;top:555px;width:10px;height:1px;background:#aaa4a0;"></div>
<svg style="position:absolute;left:139px;top:547px;" width="16" height="17" viewBox="0 0 16 17"><path d="M0.5 0 L0.5 17 M15.5 0 L15.5 17" stroke="#333" stroke-width="0.8" stroke-dasharray="1 1"/><path d="M2 1 L14 1 M2 16 L14 16" stroke="#c8c8c8" stroke-width="1.6"/><rect x="0" y="0" width="2" height="2.5" fill="#8e8"/><rect x="14" y="0" width="2" height="2.5" fill="#8e8"/><rect x="0" y="14.5" width="2" height="2.5" fill="#8e8"/><rect x="14" y="14.5" width="2" height="2.5" fill="#8e8"/><rect x="1.5" y="5.5" width="13" height="6.5" fill="#e8e8e8" stroke="#7a7a7a" stroke-width="0.9"/><path d="M2 13 L14.5 13" stroke="#666" stroke-width="1.4"/><path d="M3 8.8 L10 8.8" stroke="#555" stroke-width="1.6" stroke-dasharray="1.2 0.5"/><path d="M12.5 6.5 L12.5 11" stroke="#bbb" stroke-width="1.2"/></svg>
<span style="position:absolute;left:160.88px;top:549.84px;font:normal 400 12px/12px 'Liberation Sans',sans-serif;color:#1f1c1b;white-space:pre;letter-spacing:0.874px;-webkit-text-stroke:0.15px currentColor;">TimeSetSUp</span>
<span style="position:absolute;left:330.88px;top:549.84px;font:normal 400 12px/12px 'Liberation Sans',sans-serif;color:#1f1c1b;white-space:pre;letter-spacing:1.282px;-webkit-text-stroke:0.15px currentColor;">Видж...</span>
<div style="position:absolute;left:126px;top:571px;width:10px;height:1px;background:#aaa4a0;"></div>
<svg style="position:absolute;left:139px;top:563px;" width="16" height="17" viewBox="0 0 16 17"><rect x="0.5" y="0.5" width="15" height="16" fill="#fff" stroke="#444" stroke-width="0.8" stroke-dasharray="1 1"/><rect x="0" y="0" width="2" height="2" fill="#7e7"/><rect x="14" y="0" width="2" height="2" fill="#7e7"/><rect x="0" y="15" width="2" height="2" fill="#7e7"/><rect x="14" y="15" width="2" height="2" fill="#7e7"/><text x="8" y="10.5" font-size="7.5" font-weight="bold" text-anchor="middle" fill="#222" font-family="Liberation Serif" textLength="14" lengthAdjust="spacingAndGlyphs">Text</text><path d="M2 12.5 L14 12.5" stroke="#999" stroke-width="0.6"/><path d="M2 15 L14 15" stroke="#cfcfcf" stroke-width="1.6"/></svg>
<span style="position:absolute;left:160.88px;top:565.84px;font:normal 400 12px/12px 'Liberation Sans',sans-serif;color:#1f1c1b;white-space:pre;letter-spacing:1.256px;-webkit-text-stroke:0.15px currentColor;">Timeout</span>
<span style="position:absolute;left:330.88px;top:565.84px;font:normal 400 12px/12px 'Liberation Sans',sans-serif;color:#1f1c1b;white-space:pre;letter-spacing:1.282px;-webkit-text-stroke:0.15px currentColor;">Видж...</span>
<div style="position:absolute;left:126px;top:587px;width:10px;height:1px;background:#aaa4a0;"></div>
<svg style="position:absolute;left:139px;top:579px;" width="16" height="17" viewBox="0 0 16 17"><rect x="0.5" y="0.5" width="15" height="16" fill="#fff" stroke="#444" stroke-width="0.8" stroke-dasharray="1 1"/><rect x="0" y="0" width="2" height="2" fill="#7e7"/><rect x="14" y="0" width="2" height="2" fill="#7e7"/><rect x="0" y="15" width="2" height="2" fill="#7e7"/><rect x="14" y="15" width="2" height="2" fill="#7e7"/><text x="8" y="10.5" font-size="7.5" font-weight="bold" text-anchor="middle" fill="#222" font-family="Liberation Serif" textLength="14" lengthAdjust="spacingAndGlyphs">Text</text><path d="M2 12.5 L14 12.5" stroke="#999" stroke-width="0.6"/><path d="M2 15 L14 15" stroke="#cfcfcf" stroke-width="1.6"/></svg>
<span style="position:absolute;left:160.88px;top:581.84px;font:normal 400 12px/12px 'Liberation Sans',sans-serif;color:#1f1c1b;white-space:pre;letter-spacing:1.279px;-webkit-text-stroke:0.15px currentColor;">Установка Timeout</span>
<span style="position:absolute;left:330.88px;top:581.84px;font:normal 400 12px/12px 'Liberation Sans',sans-serif;color:#1f1c1b;white-space:pre;letter-spacing:1.282px;-webkit-text-stroke:0.15px currentColor;">Видж...</span>
<div style="position:absolute;left:126px;top:603px;width:10px;height:1px;background:#aaa4a0;"></div>
<div style="position:absolute;left:136px;top:596px;width:251px;height:15.5px;border-radius:3px;background:linear-gradient(#82cdf6,#5ab5ee 45%,#3f9fe0);box-shadow:inset 0 0 0 1px rgba(40,130,210,0.5);"></div>
<svg style="position:absolute;left:139px;top:595px;" width="16" height="17" viewBox="0 0 16 17"><path d="M0.5 0 L0.5 17 M15.5 0 L15.5 17" stroke="#333" stroke-width="0.8" stroke-dasharray="1 1"/><path d="M2 1 L14 1 M2 16 L14 16" stroke="#c8c8c8" stroke-width="1.6"/><rect x="0" y="0" width="2" height="2.5" fill="#8e8"/><rect x="14" y="0" width="2" height="2.5" fill="#8e8"/><rect x="0" y="14.5" width="2" height="2.5" fill="#8e8"/><rect x="14" y="14.5" width="2" height="2.5" fill="#8e8"/><rect x="1.5" y="5.5" width="13" height="6.5" fill="#e8e8e8" stroke="#7a7a7a" stroke-width="0.9"/><path d="M2 13 L14.5 13" stroke="#666" stroke-width="1.4"/><path d="M3 8.8 L10 8.8" stroke="#555" stroke-width="1.6" stroke-dasharray="1.2 0.5"/><path d="M12.5 6.5 L12.5 11" stroke="#bbb" stroke-width="1.2"/></svg>
<span style="position:absolute;left:160.88px;top:597.84px;font:normal 400 12px/12px 'Liberation Sans',sans-serif;color:#ffffff;white-space:pre;letter-spacing:0.828px;-webkit-text-stroke:0.15px currentColor;">ValveSet1</span>
<span style="position:absolute;left:330.88px;top:597.84px;font:normal 400 12px/12px 'Liberation Sans',sans-serif;color:#ffffff;white-space:pre;letter-spacing:1.282px;-webkit-text-stroke:0.15px currentColor;">Видж...</span>
<div style="position:absolute;left:126px;top:619px;width:10px;height:1px;background:#aaa4a0;"></div>
<svg style="position:absolute;left:139px;top:611px;" width="16" height="17" viewBox="0 0 16 17"><path d="M0.5 0 L0.5 17 M15.5 0 L15.5 17" stroke="#333" stroke-width="0.8" stroke-dasharray="1 1"/><path d="M2 1 L14 1 M2 16 L14 16" stroke="#c8c8c8" stroke-width="1.6"/><rect x="0" y="0" width="2" height="2.5" fill="#8e8"/><rect x="14" y="0" width="2" height="2.5" fill="#8e8"/><rect x="0" y="14.5" width="2" height="2.5" fill="#8e8"/><rect x="14" y="14.5" width="2" height="2.5" fill="#8e8"/><rect x="1.5" y="5.5" width="13" height="6.5" fill="#e8e8e8" stroke="#7a7a7a" stroke-width="0.9"/><path d="M2 13 L14.5 13" stroke="#666" stroke-width="1.4"/><path d="M3 8.8 L10 8.8" stroke="#555" stroke-width="1.6" stroke-dasharray="1.2 0.5"/><path d="M12.5 6.5 L12.5 11" stroke="#bbb" stroke-width="1.2"/></svg>
<span style="position:absolute;left:160.88px;top:613.84px;font:normal 400 12px/12px 'Liberation Sans',sans-serif;color:#1f1c1b;white-space:pre;letter-spacing:0.953px;-webkit-text-stroke:0.15px currentColor;">ValveSet2</span>
<span style="position:absolute;left:330.88px;top:613.84px;font:normal 400 12px/12px 'Liberation Sans',sans-serif;color:#1f1c1b;white-space:pre;letter-spacing:1.282px;-webkit-text-stroke:0.15px currentColor;">Видж...</span>
<div style="position:absolute;left:76px;top:627px;width:410px;height:3px;overflow:hidden;"><div style="position:absolute;left:65px;top:1.5px;width:8px;height:2px;background:#2b6e9a;"></div><div style="position:absolute;left:121px;top:1px;width:5px;height:1.5px;background:#444;opacity:0.7"></div><div style="position:absolute;left:137px;top:1px;width:1.5px;height:2px;background:#444;opacity:0.7"></div><div style="position:absolute;left:161px;top:1px;width:5px;height:1.5px;background:#444;opacity:0.7"></div></div>
<svg style="position:absolute;left:490px;top:139px;" width="13" height="9" viewBox="0 0 13 9"><path d="M2.5 7 L6.5 3 L10.5 7" stroke="#2b2b2b" stroke-width="1.5" fill="none"/></svg>
<div style="position:absolute;left:489.5px;top:151px;width:12.5px;height:453px;box-sizing:border-box;border-radius:6px;background:linear-gradient(90deg,#a7a09d,#b7b0ad 40%,#b0a9a6);box-shadow:inset 0 1px 2px rgba(0,0,0,0.25);"></div>
<div style="position:absolute;left:491px;top:216px;width:9.5px;height:303px;border-radius:4px;background:linear-gradient(90deg,#ebe9e7,#dcd8d5 60%,#cfcac7);box-shadow:0 1px 1px rgba(0,0,0,0.35),inset 0 0 0 0.5px rgba(0,0,0,0.15);"></div>
<svg style="position:absolute;left:489px;top:606px;" width="14" height="9" viewBox="0 0 14 9"><path d="M2 7 L7 2.5 L12 7" stroke="#2b2b2b" stroke-width="1.4" fill="none"/></svg>
<svg style="position:absolute;left:489px;top:620px;" width="14" height="9" viewBox="0 0 14 9"><path d="M2 2 L7 6.5 L12 2" stroke="#2b2b2b" stroke-width="1.4" fill="none"/></svg>
<div style="position:absolute;left:75px;top:664px;width:427px;height:369px;box-sizing:border-box;border:1px solid #b0a9a5;border-radius:4px;background:#fff;overflow:hidden;box-shadow:inset 0 1px 1px rgba(0,0,0,0.15);"></div>
<div style="position:absolute;left:76px;top:665px;width:425px;height:19px;background:linear-gradient(#c9c2be,#c3bbb7);border-radius:3px 3px 0 0;"></div>
<div style="position:absolute;left:76px;top:683px;width:425px;height:1px;background:#f2f0ee;"></div>
<span style="position:absolute;left:78.28px;top:669.04px;font:normal 400 12px/12px 'Liberation Sans',sans-serif;color:#1f1c1b;white-space:pre;letter-spacing:1.787px;-webkit-text-stroke:0.15px currentColor;">Атрибут</span>
<span style="position:absolute;left:178.68px;top:669.04px;font:normal 400 12px/12px 'Liberation Sans',sans-serif;color:#1f1c1b;white-space:pre;letter-spacing:1.174px;-webkit-text-stroke:0.15px currentColor;">Значение</span>
<svg style="position:absolute;left:173px;top:668px;" width="3" height="10" viewBox="0 0 3 10"><rect x="0.5" y="0" width="1.3" height="1.3" fill="#8a8480"/><rect x="0.5" y="3" width="1.3" height="1.3" fill="#8a8480"/><rect x="0.5" y="6" width="1.3" height="1.3" fill="#8a8480"/><rect x="0.5" y="9" width="1.0" height="1.0" fill="#8a8480"/></svg>
<svg style="position:absolute;left:498px;top:668px;" width="3" height="10" viewBox="0 0 3 10"><rect x="0.5" y="0" width="1.3" height="1.3" fill="#8a8480"/><rect x="0.5" y="3" width="1.3" height="1.3" fill="#8a8480"/><rect x="0.5" y="6" width="1.3" height="1.3" fill="#8a8480"/><rect x="0.5" y="9" width="1.0" height="1.0" fill="#8a8480"/></svg>
<div style="position:absolute;left:85px;top:692px;width:11px;height:1px;background:#aaa4a0;"></div>
<span style="position:absolute;left:99.08px;top:686.04px;font:normal 400 12px/12px 'Liberation Sans',sans-serif;color:#1f1c1b;white-space:pre;letter-spacing:0.424px;-webkit-text-stroke:0.15px currentColor;">Id</span>
<span style="position:absolute;left:178.28px;top:686.04px;font:normal 400 12px/12px 'Liberation Sans',sans-serif;color:#1f1c1b;white-space:pre;letter-spacing:0.953px;-webkit-text-stroke:0.15px currentColor;">ValveSet1</span>
<div style="position:absolute;left:76px;top:699px;width:425px;height:14px;background:#f6f5f3;"></div>
<div style="position:absolute;left:85px;top:706px;width:11px;height:1px;background:#aaa4a0;"></div>
<span style="position:absolute;left:99.08px;top:700.04px;font:normal 400 12px/12px 'Liberation Sans',sans-serif;color:#1f1c1b;white-space:pre;letter-spacing:1.522px;-webkit-text-stroke:0.15px currentColor;">Путь</span>
<span style="position:absolute;left:178.28px;top:700.04px;font:normal 400 12px/12px 'Liberation Sans',sans-serif;color:#1f1c1b;white-space:pre;letter-spacing:0.570px;-webkit-text-stroke:0.15px currentColor;">/wlb_Climat/wdg_PLC100_/wdg_ValveSet1</span>
<div style="position:absolute;left:85px;top:720px;width:11px;height:1px;background:#aaa4a0;"></div>
<span style="position:absolute;left:99.08px;top:714.04px;font:normal 400 12px/12px 'Liberation Sans',sans-serif;color:#1f1c1b;white-space:pre;letter-spacing:1.994px;-webkit-text-stroke:0.15px currentColor;">Родитель</span>
<span style="position:absolute;left:178.28px;top:714.04px;font:normal 400 12px/12px 'Liberation Sans',sans-serif;color:#1f1c1b;white-space:pre;letter-spacing:0.710px;-webkit-text-stroke:0.15px currentColor;">/wlb_originals/wdg_FormEl</span>
<div style="position:absolute;left:76px;top:727px;width:425px;height:14px;background:#f6f5f3;"></div>
<div style="position:absolute;left:85px;top:734px;width:11px;height:1px;background:#aaa4a0;"></div>
<span style="position:absolute;left:99.08px;top:728.04px;font:normal 400 12px/12px 'Liberation Sans',sans-serif;color:#1f1c1b;white-space:pre;letter-spacing:1.418px;-webkit-text-stroke:0.15px currentColor;">Владелец</span>
<span style="position:absolute;left:178.28px;top:728.04px;font:normal 400 12px/12px 'Liberation Sans',sans-serif;color:#1f1c1b;white-space:pre;letter-spacing:1.071px;-webkit-text-stroke:0.15px currentColor;">root:UI</span>
<div style="position:absolute;left:85px;top:748px;width:11px;height:1px;background:#aaa4a0;"></div>
<span style="position:absolute;left:99.08px;top:742.04px;font:normal 400 12px/12px 'Liberation Sans',sans-serif;color:#1f1c1b;white-space:pre;letter-spacing:2.472px;-webkit-text-stroke:0.15px currentColor;">Доступ</span>
<span style="position:absolute;left:178.28px;top:742.04px;font:normal 400 12px/12px 'Liberation Sans',sans-serif;color:#1f1c1b;white-space:pre;letter-spacing:-0.290px;-webkit-text-stroke:0.15px currentColor;">RWRWR_</span>
<div style="position:absolute;left:76px;top:755px;width:425px;height:14px;background:#f6f5f3;"></div>
<div style="position:absolute;left:85px;top:762px;width:11px;height:1px;background:#aaa4a0;"></div>
<span style="position:absolute;left:99.08px;top:756.04px;font:normal 400 12px/12px 'Liberation Sans',sans-serif;color:#1f1c1b;white-space:pre;letter-spacing:1.910px;-webkit-text-stroke:0.15px currentColor;">Корень</span>
<span style="position:absolute;left:178.28px;top:756.04px;font:normal 400 12px/12px 'Liberation Sans',sans-serif;color:#1f1c1b;white-space:pre;letter-spacing:0.954px;-webkit-text-stroke:0.15px currentColor;">FormEl</span>
<div style="position:absolute;left:85px;top:776px;width:11px;height:1px;background:#aaa4a0;"></div>
<span style="position:absolute;left:99.08px;top:770.04px;font:normal 400 12px/12px 'Liberation Sans',sans-serif;color:#1f1c1b;white-space:pre;letter-spacing:1.533px;-webkit-text-stroke:0.15px currentColor;">Имя</span>
<div style="position:absolute;left:76px;top:783px;width:425px;height:50px;background:#f6f5f3;"></div>
<div style="position:absolute;left:85px;top:808px;width:11px;height:1px;background:#aaa4a0;"></div>
<span style="position:absolute;left:99.08px;top:802.04px;font:normal 400 12px/12px 'Liberation Sans',sans-serif;color:#1f1c1b;white-space:pre;letter-spacing:1.246px;-webkit-text-stroke:0.15px currentColor;">Описание</span>
<div style="position:absolute;left:85px;top:840px;width:11px;height:1px;background:#aaa4a0;"></div>
<span style="position:absolute;left:99.08px;top:834.04px;font:normal 400 12px/12px 'Liberation Sans',sans-serif;color:#1f1c1b;white-space:pre;letter-spacing:1.125px;-webkit-text-stroke:0.15px currentColor;">Включен</span>
<span style="position:absolute;left:178.28px;top:834.04px;font:normal 400 12px/12px 'Liberation Sans',sans-serif;color:#1f1c1b;white-space:pre;letter-spacing:2.084px;-webkit-text-stroke:0.15px currentColor;">true</span>
<div style="position:absolute;left:76px;top:847px;width:425px;height:14px;background:#f6f5f3;"></div>
<div style="position:absolute;left:85px;top:854px;width:11px;height:1px;background:#aaa4a0;"></div>
<span style="position:absolute;left:99.08px;top:848.04px;font:normal 400 12px/12px 'Liberation Sans',sans-serif;color:#1414ee;white-space:pre;letter-spacing:1.503px;-webkit-text-stroke:0.15px currentColor;">Активный</span>
<span style="position:absolute;left:178.28px;top:848.04px;font:normal 400 12px/12px 'Liberation Sans',sans-serif;color:#1f1c1b;white-space:pre;letter-spacing:2.084px;-webkit-text-stroke:0.15px currentColor;">true</span>
<div style="position:absolute;left:90px;top:868px;width:6px;height:1px;background:#aaa4a0;"></div>
<span style="position:absolute;left:99.08px;top:862.04px;font:normal 400 12px/12px 'Liberation Sans',sans-serif;color:#1f1c1b;white-space:pre;letter-spacing:1.686px;-webkit-text-stroke:0.15px currentColor;">Геометрия</span>
<span style="position:absolute;left:178.28px;top:862.04px;font:normal 400 12px/12px 'Liberation Sans',sans-serif;color:#1f1c1b;white-space:pre;letter-spacing:1.100px;-webkit-text-stroke:0.15px currentColor;">[370, 70, 64, 280, 1, 1, 30, 0]</span>
<div style="position:absolute;left:76px;top:875px;width:425px;height:14px;background:#f6f5f3;"></div>
<div style="position:absolute;left:90px;top:882px;width:6px;height:1px;background:#aaa4a0;"></div>
<span style="position:absolute;left:99.08px;top:876.04px;font:normal 400 12px/12px 'Liberation Sans',sans-serif;color:#1f1c1b;white-space:pre;letter-spacing:1.516px;-webkit-text-stroke:0.15px currentColor;">Помощь</span>
<span style="position:absolute;left:178.28px;top:876.04px;font:normal 400 12px/12px 'Liberation Sans',sans-serif;color:#1f1c1b;white-space:pre;letter-spacing:1.032px;-webkit-text-stroke:0.15px currentColor;">[, ]</span>
<div style="position:absolute;left:85px;top:914px;width:11px;height:1px;background:#aaa4a0;"></div>
<span style="position:absolute;left:99.08px;top:908.04px;font:normal 400 12px/12px 'Liberation Sans',sans-serif;color:#1f1c1b;white-space:pre;letter-spacing:1.747px;-webkit-text-stroke:0.15px currentColor;">Контекс...</span>
<div style="position:absolute;left:76px;top:939px;width:425px;height:50px;background:#f6f5f3;"></div>
<div style="position:absolute;left:85px;top:964px;width:11px;height:1px;background:#aaa4a0;"></div>
<span style="position:absolute;left:99.08px;top:958.04px;font:normal 400 12px/12px 'Liberation Sans',sans-serif;color:#1414ee;white-space:pre;letter-spacing:1.436px;-webkit-text-stroke:0.15px currentColor;">Обработ...</span>
<div style="position:absolute;left:85px;top:996px;width:11px;height:1px;background:#aaa4a0;"></div>
<span style="position:absolute;left:99.08px;top:990.04px;font:normal 400 12px/12px 'Liberation Sans',sans-serif;color:#1414ee;white-space:pre;letter-spacing:0.931px;-webkit-text-stroke:0.15px currentColor;">Тип элем...</span>
<span style="position:absolute;left:178.28px;top:990.04px;font:normal 400 12px/12px 'Liberation Sans',sans-serif;color:#1f1c1b;white-space:pre;letter-spacing:1.172px;-webkit-text-stroke:0.15px currentColor;">Слайдер</span>
<div style="position:absolute;left:76px;top:1003px;width:425px;height:14px;background:#f6f5f3;"></div>
<div style="position:absolute;left:85px;top:1010px;width:11px;height:1px;background:#aaa4a0;"></div>
<span style="position:absolute;left:99.08px;top:1004.04px;font:normal 400 12px/12px 'Liberation Sans',sans-serif;color:#1414ee;white-space:pre;letter-spacing:1.460px;-webkit-text-stroke:0.15px currentColor;">Значение</span>
<span style="position:absolute;left:178.28px;top:1004.04px;font:normal 400 12px/12px 'Liberation Sans',sans-serif;color:#1f1c1b;white-space:pre;-webkit-text-stroke:0.15px currentColor;">0</span>
<div style="position:absolute;left:85px;top:1024px;width:11px;height:1px;background:#aaa4a0;"></div>
<span style="position:absolute;left:99.08px;top:1018.04px;font:normal 400 12px/12px 'Liberation Sans',sans-serif;color:#1414ee;white-space:pre;letter-spacing:1.488px;-webkit-text-stroke:0.15px currentColor;">Конфигу...</span>
<span style="position:absolute;left:178.28px;top:1018.04px;font:normal 400 12px/12px 'Liberation Sans',sans-serif;color:#1f1c1b;white-space:pre;letter-spacing:1.291px;-webkit-text-stroke:0.15px currentColor;">1:0:100:1:10</span>
<div style="position:absolute;left:85px;top:685px;width:1px;height:339px;background:#aaa4a0;"></div>
<div style="position:absolute;left:82px;top:863px;width:6px;height:10px;background:#ffffff;"></div>
<svg style="position:absolute;left:82px;top:863px;" width="7" height="9" viewBox="0 0 7 9"><path d="M1.8 1.2 L5.3 4.5 L1.8 7.8" stroke="#1f1c1b" stroke-width="1.5" fill="none"/></svg>
<div style="position:absolute;left:82px;top:877px;width:6px;height:10px;background:#f6f5f3;"></div>
<svg style="position:absolute;left:82px;top:877px;" width="7" height="9" viewBox="0 0 7 9"><path d="M1.8 1.2 L5.3 4.5 L1.8 7.8" stroke="#1f1c1b" stroke-width="1.5" fill="none"/></svg>
<div style="position:absolute;left:511px;top:114px;width:733px;height:501px;box-sizing:border-box;border-radius:5px 5px 3px 3px;background:linear-gradient(#ecebe9 0px,#e2dfdc 60px,#d9d5d2 170px,#ccc5c2 250px,#c5bdb9 310px);box-shadow:inset 1px 1px 0 #fafafa,0 1px 2px rgba(40,60,80,0.6),-1px 0 1px rgba(60,80,100,0.35);"></div>
<svg style="position:absolute;left:516.5px;top:119.5px;" width="16" height="16" viewBox="0 0 16 16"><rect x="0.5" y="0.5" width="15" height="15" fill="#d4d4d4" stroke="#a0a0a0"/><rect x="0.5" y="0.5" width="15" height="2.2" fill="#4b8db5"/><path d="M1.8 10.5 L4.8 3.8 L7.8 10.5 Z" fill="#3aa848"/><text x="11.5" y="10" font-size="8" font-weight="bold" font-style="italic" text-anchor="middle" fill="#1a1a1a" font-family="Liberation Serif">T</text><path d="M2 13.2 L14 13.2" stroke="#333" stroke-width="1.6" stroke-dasharray="1.2 0.5"/></svg>
<span style="position:absolute;left:750.22px;top:120.40px;font:normal 400 13px/13px 'Liberation Sans',sans-serif;color:#1f1c1b;white-space:pre;letter-spacing:0.309px;-webkit-text-stroke:0.15px currentColor;">Виджет: /wlb_Climat/wdg_PLC100_</span>
<svg style="position:absolute;left:1186px;top:118px;" width="16" height="16" viewBox="0 0 16 16"><circle cx="8" cy="8" r="6.5" fill="rgba(255,255,255,0.45)"/><path d="M4.5 6.5 L8 10 L11.5 6.5" stroke="#2b2b2b" stroke-width="1.6" fill="none"/></svg>
<svg style="position:absolute;left:1204px;top:118px;" width="16" height="16" viewBox="0 0 16 16"><circle cx="8" cy="8" r="6.5" fill="rgba(255,255,255,0.45)"/><path d="M4.5 9.5 L8 6 L11.5 9.5" stroke="#2b2b2b" stroke-width="1.6" fill="none"/></svg>
<svg style="position:absolute;left:1222px;top:118px;" width="16" height="16" viewBox="0 0 16 16"><circle cx="8" cy="8" r="6.5" fill="rgba(255,255,255,0.45)"/><path d="M5 5 L11 11 M11 5 L5 11" stroke="#2b2b2b" stroke-width="1.6" fill="none"/></svg>
<div style="position:absolute;left:516px;top:139px;width:723px;height:471px;box-sizing:border-box;border:1px solid #77716e;border-radius:4px;box-shadow:inset 1px 1px 0 rgba(0,0,0,0.12),0 1px 0 rgba(255,255,255,0.5);"></div>
<div style="position:absolute;left:526px;top:171px;width:702px;height:407px;background:#808080;"></div>
<span style="position:absolute;left:672.20px;top:180.37px;font:italic 700 20px/20px 'Liberation Sans',sans-serif;color:#000;white-space:pre;letter-spacing:-0.083px;">ПЛК100 (не определен)</span>
<div style="position:absolute;left:673px;top:200px;width:227px;height:3px;background:#000;"></div>
<div style="position:absolute;left:1105px;top:186px;width:98px;height:21px;background:#000;"></div>
<div style="position:absolute;left:1105px;top:186px;width:15px;height:20px;box-sizing:border-box;border:1px solid #8a8a8a;border-left-color:#444;border-top-color:#444;"></div>
<span style="position:absolute;left:1106.93px;top:188.73px;font:normal 700 14.5px/14.5px 'Liberation Sans',sans-serif;color:#00ff00;white-space:pre;">P</span>
<span style="position:absolute;left:1149.80px;top:186.07px;font:normal 700 20px/20px 'Liberation Sans',sans-serif;color:#00ff00;white-space:pre;letter-spacing:0.159px;">1.340</span>
<div style="position:absolute;left:531px;top:211px;width:260px;height:358px;box-sizing:border-box;border:1px solid #e2e2e2;"></div>
<div style="position:absolute;left:531px;top:232px;width:260px;height:1px;background:#e2e2e2;"></div>
<div style="position:absolute;left:796px;top:211px;width:408px;height:358px;box-sizing:border-box;border:1px solid #e2e2e2;"></div>
<div style="position:absolute;left:796px;top:232px;width:408px;height:1px;background:#e2e2e2;"></div>
<span style="position:absolute;left:563.24px;top:213.46px;font:normal 700 16px/16px 'Liberation Sans',sans-serif;color:#000;white-space:pre;letter-spacing:0.135px;">Дискретный выход 12В.</span>
<span style="position:absolute;left:920.64px;top:213.06px;font:normal 700 16px/16px 'Liberation Sans',sans-serif;color:#000;white-space:pre;letter-spacing:0.147px;">Клапан вентиляции</span>
<div style="position:absolute;left:541px;top:243px;width:80px;height:6px;background:#000;"></div>
<div style="position:absolute;left:541px;top:249px;width:80px;height:246px;background:#9a9a9a;"></div>
<div style="position:absolute;left:541px;top:495px;width:80px;height:6px;background:#000;"></div>
<svg style="position:absolute;left:541px;top:243px;" width="80" height="258" viewBox="0 0 80 258"><path d="M10 9 L70 9 M10 249 L70 249" stroke="#6e6e6e" stroke-width="4"/><polyline points="69,9 11,39 69,69 11,99 69,129 11,159 69,189 11,219 69,249" fill="none" stroke="#6a6a6a" stroke-width="3.8" stroke-linejoin="bevel"/></svg>
<div style="position:absolute;left:541px;top:249px;width:80px;height:246px;overflow:hidden;">
<span style="position:absolute;left:-13.43px;top:101.72px;font:normal 400 43px/43px 'Liberation Sans',sans-serif;color:#c0c0c0;white-space:pre;letter-spacing:-2.515px;-webkit-text-stroke:0.3px #c0c0c0;transform:rotate(-90deg);transform-origin:52.93px 21.50px;">Выкл.</span>
</div>
<div style="position:absolute;left:635.5px;top:264.5px;width:129px;height:52px;box-sizing:border-box;border:1px solid #5e5c5a;border-radius:3px;background:linear-gradient(#ebe7e4,#dcd8d5 50%,#d0ccc8);box-shadow:inset 0 1px 0 rgba(255,255,255,0.7);"></div>
<span style="position:absolute;left:656.00px;top:279.57px;font:normal 400 20px/20px 'Liberation Sans',sans-serif;color:#111;white-space:pre;letter-spacing:-0.246px;">Включить</span>
<span style="position:absolute;left:640.10px;top:342.12px;font:normal 400 12.5px/12.5px 'Liberation Sans',sans-serif;color:#111;white-space:pre;letter-spacing:0.979px;-webkit-text-stroke:0.15px currentColor;">Установка времени</span>
<span style="position:absolute;left:663.60px;top:357.62px;font:normal 400 12.5px/12.5px 'Liberation Sans',sans-serif;color:#111;white-space:pre;letter-spacing:1.252px;-webkit-text-stroke:0.15px currentColor;">отключения</span>
<div style="position:absolute;left:627px;top:372px;width:38px;height:38px;box-sizing:border-box;border:1px solid #6a6866;border-radius:3px;background:linear-gradient(#e8e5e2,#dedad7 50%,#d2ceca);box-shadow:inset 0 1px 0 rgba(255,255,255,0.6);"></div>
<svg style="position:absolute;left:631px;top:376px;" width="30" height="30" viewBox="0 0 30 30"><defs><linearGradient id="ab" x1="0" y1="0" x2="0" y2="1"><stop offset="0" stop-color="#b8d0f8"/><stop offset="0.45" stop-color="#5f92ee"/><stop offset="1" stop-color="#2f66e0"/></linearGradient></defs><circle cx="15" cy="15" r="14" fill="url(#ab)" stroke="#2a5ad0" stroke-width="1.6"/><path d="M8 15.5 L15 8.5 L22 15.5" stroke="#fff" stroke-width="4" fill="none" stroke-linecap="round"/><path d="M15 9 L15 24" stroke="#fff" stroke-width="4.2" stroke-linecap="round"/><path d="M3 13 C4 6 9 2.5 15 2.5 C21 2.5 26 6 27 13 C22 9 8 9 3 13 Z" fill="rgba(255,255,255,0.35)"/></svg>
<div style="position:absolute;left:627px;top:452px;width:38px;height:38px;box-sizing:border-box;border:1px solid #6a6866;border-radius:3px;background:linear-gradient(#e8e5e2,#dedad7 50%,#d2ceca);box-shadow:inset 0 1px 0 rgba(255,255,255,0.6);"></div>
<svg style="position:absolute;left:631px;top:456px;" width="30" height="30" viewBox="0 0 30 30"><defs><linearGradient id="ab" x1="0" y1="0" x2="0" y2="1"><stop offset="0" stop-color="#b8d0f8"/><stop offset="0.45" stop-color="#5f92ee"/><stop offset="1" stop-color="#2f66e0"/></linearGradient></defs><circle cx="15" cy="15" r="14" fill="url(#ab)" stroke="#2a5ad0" stroke-width="1.6"/><path d="M8 14.5 L15 21.5 L22 14.5" stroke="#fff" stroke-width="4" fill="none" stroke-linecap="round"/><path d="M15 6 L15 21" stroke="#fff" stroke-width="4.2" stroke-linecap="round"/><path d="M3 13 C4 6 9 2.5 15 2.5 C21 2.5 26 6 27 13 C22 9 8 9 3 13 Z" fill="rgba(255,255,255,0.35)"/></svg>
<div style="position:absolute;left:669px;top:372px;width:38px;height:38px;box-sizing:border-box;border:1px solid #6a6866;border-radius:3px;background:linear-gradient(#e8e5e2,#dedad7 50%,#d2ceca);box-shadow:inset 0 1px 0 rgba(255,255,255,0.6);"></div>
<svg style="position:absolute;left:673px;top:376px;" width="30" height="30" viewBox="0 0 30 30"><defs><linearGradient id="ab" x1="0" y1="0" x2="0" y2="1"><stop offset="0" stop-color="#b8d0f8"/><stop offset="0.45" stop-color="#5f92ee"/><stop offset="1" stop-color="#2f66e0"/></linearGradient></defs><circle cx="15" cy="15" r="14" fill="url(#ab)" stroke="#2a5ad0" stroke-width="1.6"/><path d="M8 15.5 L15 8.5 L22 15.5" stroke="#fff" stroke-width="4" fill="none" stroke-linecap="round"/><path d="M15 9 L15 24" stroke="#fff" stroke-width="4.2" stroke-linecap="round"/><path d="M3 13 C4 6 9 2.5 15 2.5 C21 2.5 26 6 27 13 C22 9 8 9 3 13 Z" fill="rgba(255,255,255,0.35)"/></svg>
<div style="position:absolute;left:669px;top:452px;width:38px;height:38px;box-sizing:border-box;border:1px solid #6a6866;border-radius:3px;background:linear-gradient(#e8e5e2,#dedad7 50%,#d2ceca);box-shadow:inset 0 1px 0 rgba(255,255,255,0.6);"></div>
<svg style="position:absolute;left:673px;top:456px;" width="30" height="30" viewBox="0 0 30 30"><defs><linearGradient id="ab" x1="0" y1="0" x2="0" y2="1"><stop offset="0" stop-color="#b8d0f8"/><stop offset="0.45" stop-color="#5f92ee"/><stop offset="1" stop-color="#2f66e0"/></linearGradient></defs><circle cx="15" cy="15" r="14" fill="url(#ab)" stroke="#2a5ad0" stroke-width="1.6"/><path d="M8 14.5 L15 21.5 L22 14.5" stroke="#fff" stroke-width="4" fill="none" stroke-linecap="round"/><path d="M15 6 L15 21" stroke="#fff" stroke-width="4.2" stroke-linecap="round"/><path d="M3 13 C4 6 9 2.5 15 2.5 C21 2.5 26 6 27 13 C22 9 8 9 3 13 Z" fill="rgba(255,255,255,0.35)"/></svg>
<div style="position:absolute;left:711px;top:372px;width:38px;height:38px;box-sizing:border-box;border:1px solid #6a6866;border-radius:3px;background:linear-gradient(#e8e5e2,#dedad7 50%,#d2ceca);box-shadow:inset 0 1px 0 rgba(255,255,255,0.6);"></div>
<svg style="position:absolute;left:715px;top:376px;" width="30" height="30" viewBox="0 0 30 30"><defs><linearGradient id="ab" x1="0" y1="0" x2="0" y2="1"><stop offset="0" stop-color="#b8d0f8"/><stop offset="0.45" stop-color="#5f92ee"/><stop offset="1" stop-color="#2f66e0"/></linearGradient></defs><circle cx="15" cy="15" r="14" fill="url(#ab)" stroke="#2a5ad0" stroke-width="1.6"/><path d="M8 15.5 L15 8.5 L22 15.5" stroke="#fff" stroke-width="4" fill="none" stroke-linecap="round"/><path d="M15 9 L15 24" stroke="#fff" stroke-width="4.2" stroke-linecap="round"/><path d="M3 13 C4 6 9 2.5 15 2.5 C21 2.5 26 6 27 13 C22 9 8 9 3 13 Z" fill="rgba(255,255,255,0.35)"/></svg>
<div style="position:absolute;left:711px;top:452px;width:38px;height:38px;box-sizing:border-box;border:1px solid #6a6866;border-radius:3px;background:linear-gradient(#e8e5e2,#dedad7 50%,#d2ceca);box-shadow:inset 0 1px 0 rgba(255,255,255,0.6);"></div>
<svg style="position:absolute;left:715px;top:456px;" width="30" height="30" viewBox="0 0 30 30"><defs><linearGradient id="ab" x1="0" y1="0" x2="0" y2="1"><stop offset="0" stop-color="#b8d0f8"/><stop offset="0.45" stop-color="#5f92ee"/><stop offset="1" stop-color="#2f66e0"/></linearGradient></defs><circle cx="15" cy="15" r="14" fill="url(#ab)" stroke="#2a5ad0" stroke-width="1.6"/><path d="M8 14.5 L15 21.5 L22 14.5" stroke="#fff" stroke-width="4" fill="none" stroke-linecap="round"/><path d="M15 6 L15 21" stroke="#fff" stroke-width="4.2" stroke-linecap="round"/><path d="M3 13 C4 6 9 2.5 15 2.5 C21 2.5 26 6 27 13 C22 9 8 9 3 13 Z" fill="rgba(255,255,255,0.35)"/></svg>
<div style="position:absolute;left:750px;top:411px;width:38px;height:38px;box-sizing:border-box;border:1px solid #6a6866;border-radius:3px;background:linear-gradient(#e8e5e2,#dedad7 50%,#d2ceca);box-shadow:inset 0 1px 0 rgba(255,255,255,0.6);"></div>
<svg style="position:absolute;left:752px;top:414px;" width="36" height="34" viewBox="0 0 36 34"><defs><linearGradient id="gk" x1="0" y1="0" x2="1" y2="1"><stop offset="0" stop-color="#8af58a"/><stop offset="0.6" stop-color="#22c022"/><stop offset="1" stop-color="#0a8a0a"/></linearGradient></defs><path d="M1 7 L8 28 L33 4 L10 18 Z" fill="url(#gk)" stroke="#0a6a0a" stroke-width="0.8" stroke-linejoin="round"/></svg>
<span style="position:absolute;left:651.84px;top:426.06px;font:normal 700 16px/16px 'Liberation Sans',sans-serif;color:#000;white-space:pre;">0</span>
<span style="position:absolute;left:696.84px;top:426.06px;font:normal 700 16px/16px 'Liberation Sans',sans-serif;color:#000;white-space:pre;">0</span>
<span style="position:absolute;left:737.84px;top:426.06px;font:normal 700 16px/16px 'Liberation Sans',sans-serif;color:#000;white-space:pre;">0</span>
<span style="position:absolute;left:626.80px;top:493.42px;font:normal 400 12.5px/12.5px 'Liberation Sans',sans-serif;color:#111;white-space:pre;letter-spacing:0.979px;-webkit-text-stroke:0.15px currentColor;">Время до отключения:</span>
<span style="position:absolute;left:692.25px;top:508.72px;font:normal 400 12.5px/12.5px 'Liberation Sans',sans-serif;color:#111;white-space:pre;letter-spacing:0.906px;-webkit-text-stroke:0.15px currentColor;">0 с</span>
<div style="position:absolute;left:806px;top:247px;width:80px;height:6px;background:#000;"></div>
<div style="position:absolute;left:806px;top:253px;width:80px;height:246px;background:#9a9a9a;"></div>
<div style="position:absolute;left:806px;top:499px;width:80px;height:6px;background:#000;"></div>
<div style="position:absolute;left:843px;top:258px;width:6px;height:58px;background:#000;"></div>
<div style="position:absolute;left:843px;top:318px;width:6px;height:58px;background:#000;"></div>
<div style="position:absolute;left:843px;top:378px;width:6px;height:58px;background:#000;"></div>
<div style="position:absolute;left:843px;top:438px;width:6px;height:58px;background:#000;"></div>
<div style="position:absolute;left:806px;top:253px;width:80px;height:246px;overflow:hidden;">
<span style="position:absolute;left:-7.95px;top:94.54px;font:normal 400 57.5px/57.5px 'Liberation Sans',sans-serif;color:#c0c0c0;white-space:pre;letter-spacing:-0.597px;-webkit-text-stroke:0.3px #c0c0c0;transform:rotate(-90deg);transform-origin:48.95px 28.75px;">0 %</span>
</div>
<div style="position:absolute;left:925.0px;top:246px;width:5px;height:265px;border-radius:2px;background:linear-gradient(90deg,#626262,#6e6e6e 50%,#767676);box-shadow:0 0 0 0.5px rgba(0,0,0,0.1);"></div>
<div style="position:absolute;left:911.0px;top:251px;width:12px;height:1px;background:#6e6e6e;"></div>
<div style="position:absolute;left:933.0px;top:251px;width:11px;height:1px;background:#6e6e6e;"></div>
<div style="position:absolute;left:911.0px;top:277px;width:12px;height:1px;background:#6e6e6e;"></div>
<div style="position:absolute;left:933.0px;top:277px;width:11px;height:1px;background:#6e6e6e;"></div>
<div style="position:absolute;left:911.0px;top:303px;width:12px;height:1px;background:#6e6e6e;"></div>
<div style="position:absolute;left:933.0px;top:303px;width:11px;height:1px;background:#6e6e6e;"></div>
<div style="position:absolute;left:911.0px;top:329px;width:12px;height:1px;background:#6e6e6e;"></div>
<div style="position:absolute;left:933.0px;top:329px;width:11px;height:1px;background:#6e6e6e;"></div>
<div style="position:absolute;left:911.0px;top:355px;width:12px;height:1px;background:#6e6e6e;"></div>
<div style="position:absolute;left:933.0px;top:355px;width:11px;height:1px;background:#6e6e6e;"></div>
<div style="position:absolute;left:911.0px;top:381px;width:12px;height:1px;background:#6e6e6e;"></div>
<div style="position:absolute;left:933.0px;top:381px;width:11px;height:1px;background:#6e6e6e;"></div>
<div style="position:absolute;left:911.0px;top:407px;width:12px;height:1px;background:#6e6e6e;"></div>
<div style="position:absolute;left:933.0px;top:407px;width:11px;height:1px;background:#6e6e6e;"></div>
<div style="position:absolute;left:911.0px;top:433px;width:12px;height:1px;background:#6e6e6e;"></div>
<div style="position:absolute;left:933.0px;top:433px;width:11px;height:1px;background:#6e6e6e;"></div>
<div style="position:absolute;left:911.0px;top:459px;width:12px;height:1px;background:#6e6e6e;"></div>
<div style="position:absolute;left:933.0px;top:459px;width:11px;height:1px;background:#6e6e6e;"></div>
<div style="position:absolute;left:911.0px;top:485px;width:12px;height:1px;background:#6e6e6e;"></div>
<div style="position:absolute;left:933.0px;top:485px;width:11px;height:1px;background:#6e6e6e;"></div>
<div style="position:absolute;left:911.0px;top:511px;width:12px;height:1px;background:#6e6e6e;"></div>
<div style="position:absolute;left:933.0px;top:511px;width:11px;height:1px;background:#6e6e6e;"></div>
<svg style="position:absolute;left:919.5px;top:502px;" width="17" height="17" viewBox="0 0 17 17"><defs><radialGradient id="kn" cx="0.5" cy="0.3" r="0.7"><stop offset="0" stop-color="#f6f5f4"/><stop offset="1" stop-color="#c8c4c1"/></radialGradient></defs><circle cx="8.5" cy="8.5" r="6.6" fill="url(#kn)" stroke="#8a8683" stroke-width="0.6"/><ellipse cx="8.5" cy="15.5" rx="5" ry="1" fill="rgba(0,0,0,0.15)"/></svg>
<div style="position:absolute;left:990.0px;top:246px;width:5px;height:265px;border-radius:2px;background:linear-gradient(90deg,#626262,#6e6e6e 50%,#767676);box-shadow:0 0 0 0.5px rgba(0,0,0,0.1);"></div>
<div style="position:absolute;left:976.0px;top:251px;width:12px;height:1px;background:#6e6e6e;"></div>
<div style="position:absolute;left:998.0px;top:251px;width:11px;height:1px;background:#6e6e6e;"></div>
<div style="position:absolute;left:976.0px;top:277px;width:12px;height:1px;background:#6e6e6e;"></div>
<div style="position:absolute;left:998.0px;top:277px;width:11px;height:1px;background:#6e6e6e;"></div>
<div style="position:absolute;left:976.0px;top:303px;width:12px;height:1px;background:#6e6e6e;"></div>
<div style="position:absolute;left:998.0px;top:303px;width:11px;height:1px;background:#6e6e6e;"></div>
<div style="position:absolute;left:976.0px;top:329px;width:12px;height:1px;background:#6e6e6e;"></div>
<div style="position:absolute;left:998.0px;top:329px;width:11px;height:1px;background:#6e6e6e;"></div>
<div style="position:absolute;left:976.0px;top:355px;width:12px;height:1px;background:#6e6e6e;"></div>
<div style="position:absolute;left:998.0px;top:355px;width:11px;height:1px;background:#6e6e6e;"></div>
<div style="position:absolute;left:976.0px;top:381px;width:12px;height:1px;background:#6e6e6e;"></div>
<div style="position:absolute;left:998.0px;top:381px;width:11px;height:1px;background:#6e6e6e;"></div>
<div style="position:absolute;left:976.0px;top:407px;width:12px;height:1px;background:#6e6e6e;"></div>
<div style="position:absolute;left:998.0px;top:407px;width:11px;height:1px;background:#6e6e6e;"></div>
<div style="position:absolute;left:976.0px;top:433px;width:12px;height:1px;background:#6e6e6e;"></div>
<div style="position:absolute;left:998.0px;top:433px;width:11px;height:1px;background:#6e6e6e;"></div>
<div style="position:absolute;left:976.0px;top:459px;width:12px;height:1px;background:#6e6e6e;"></div>
<div style="position:absolute;left:998.0px;top:459px;width:11px;height:1px;background:#6e6e6e;"></div>
<div style="position:absolute;left:976.0px;top:485px;width:12px;height:1px;background:#6e6e6e;"></div>
<div style="position:absolute;left:998.0px;top:485px;width:11px;height:1px;background:#6e6e6e;"></div>
<div style="position:absolute;left:976.0px;top:511px;width:12px;height:1px;background:#6e6e6e;"></div>
<div style="position:absolute;left:998.0px;top:511px;width:11px;height:1px;background:#6e6e6e;"></div>
<svg style="position:absolute;left:984.5px;top:502px;" width="17" height="17" viewBox="0 0 17 17"><defs><radialGradient id="kn" cx="0.5" cy="0.3" r="0.7"><stop offset="0" stop-color="#f6f5f4"/><stop offset="1" stop-color="#c8c4c1"/></radialGradient></defs><circle cx="8.5" cy="8.5" r="6.6" fill="url(#kn)" stroke="#8a8683" stroke-width="0.6"/><ellipse cx="8.5" cy="15.5" rx="5" ry="1" fill="rgba(0,0,0,0.15)"/></svg>
<div style="position:absolute;left:893px;top:238px;width:6px;height:6px;box-sizing:border-box;border:1px solid #000;background:#8ef08e;"></div>
<div style="position:absolute;left:925px;top:238px;width:6px;height:6px;box-sizing:border-box;border:1px solid #000;background:#8ef08e;"></div>
<div style="position:absolute;left:957px;top:238px;width:6px;height:6px;box-sizing:border-box;border:1px solid #000;background:#8ef08e;"></div>
<div style="position:absolute;left:893px;top:378px;width:6px;height:6px;box-sizing:border-box;border:1px solid #000;background:#8ef08e;"></div>
<div style="position:absolute;left:957px;top:378px;width:6px;height:6px;box-sizing:border-box;border:1px solid #000;background:#8ef08e;"></div>
<div style="position:absolute;left:893px;top:518px;width:6px;height:6px;box-sizing:border-box;border:1px solid #000;background:#8ef08e;"></div>
<div style="position:absolute;left:925px;top:518px;width:6px;height:6px;box-sizing:border-box;border:1px solid #000;background:#8ef08e;"></div>
<div style="position:absolute;left:957px;top:518px;width:6px;height:6px;box-sizing:border-box;border:1px solid #000;background:#8ef08e;"></div>
<svg style="position:absolute;left:1036px;top:252.0px;" width="13" height="13" viewBox="0 0 13 13"><circle cx="6.5" cy="6.5" r="5.4" fill="none" stroke="#000" stroke-width="1.1"/></svg>
<span style="position:absolute;left:1054.56px;top:251.95px;font:normal 700 14px/14px 'Liberation Sans',sans-serif;color:#000;white-space:pre;letter-spacing:0.695px;">Led</span>
<svg style="position:absolute;left:1036px;top:287.0px;" width="13" height="13" viewBox="0 0 13 13"><circle cx="6.5" cy="6.5" r="5.4" fill="none" stroke="#000" stroke-width="1.1"/></svg>
<span style="position:absolute;left:1054.56px;top:286.95px;font:normal 700 14px/14px 'Liberation Sans',sans-serif;color:#000;white-space:pre;letter-spacing:0.695px;">Led</span>
<svg style="position:absolute;left:1036px;top:322.0px;" width="13" height="13" viewBox="0 0 13 13"><circle cx="6.5" cy="6.5" r="5.4" fill="none" stroke="#000" stroke-width="1.1"/></svg>
<span style="position:absolute;left:1054.56px;top:321.95px;font:normal 700 14px/14px 'Liberation Sans',sans-serif;color:#000;white-space:pre;letter-spacing:0.695px;">Led</span>
<svg style="position:absolute;left:1036px;top:357.0px;" width="13" height="13" viewBox="0 0 13 13"><circle cx="6.5" cy="6.5" r="5.4" fill="none" stroke="#000" stroke-width="1.1"/></svg>
<span style="position:absolute;left:1054.56px;top:356.95px;font:normal 700 14px/14px 'Liberation Sans',sans-serif;color:#000;white-space:pre;letter-spacing:0.695px;">Led</span>
<span style="position:absolute;left:899.45px;top:526.02px;font:normal 400 12.5px/12.5px 'Liberation Sans',sans-serif;color:#111;white-space:pre;letter-spacing:1.464px;-webkit-text-stroke:0.15px currentColor;">Линия</span>
<span style="position:absolute;left:881.25px;top:540.82px;font:normal 400 12.5px/12.5px 'Liberation Sans',sans-serif;color:#111;white-space:pre;letter-spacing:1.168px;-webkit-text-stroke:0.15px currentColor;">управления</span>
<span style="position:absolute;left:958.45px;top:527.92px;font:normal 400 12.5px/12.5px 'Liberation Sans',sans-serif;color:#111;white-space:pre;letter-spacing:1.146px;-webkit-text-stroke:0.15px currentColor;">Линия ОС</span>
<svg style="position:absolute;left:638px;top:657px;" width="14" height="22" viewBox="0 0 14 22"><path d="M1.5 1.5 L1.5 18.8 L5.6 15 L8.3 20.2 L10.8 19.2 L8.4 13.8 L13 13.8 Z" fill="#fff" stroke="#000" stroke-width="1.2" stroke-linejoin="round"/></svg>
</body></html>
